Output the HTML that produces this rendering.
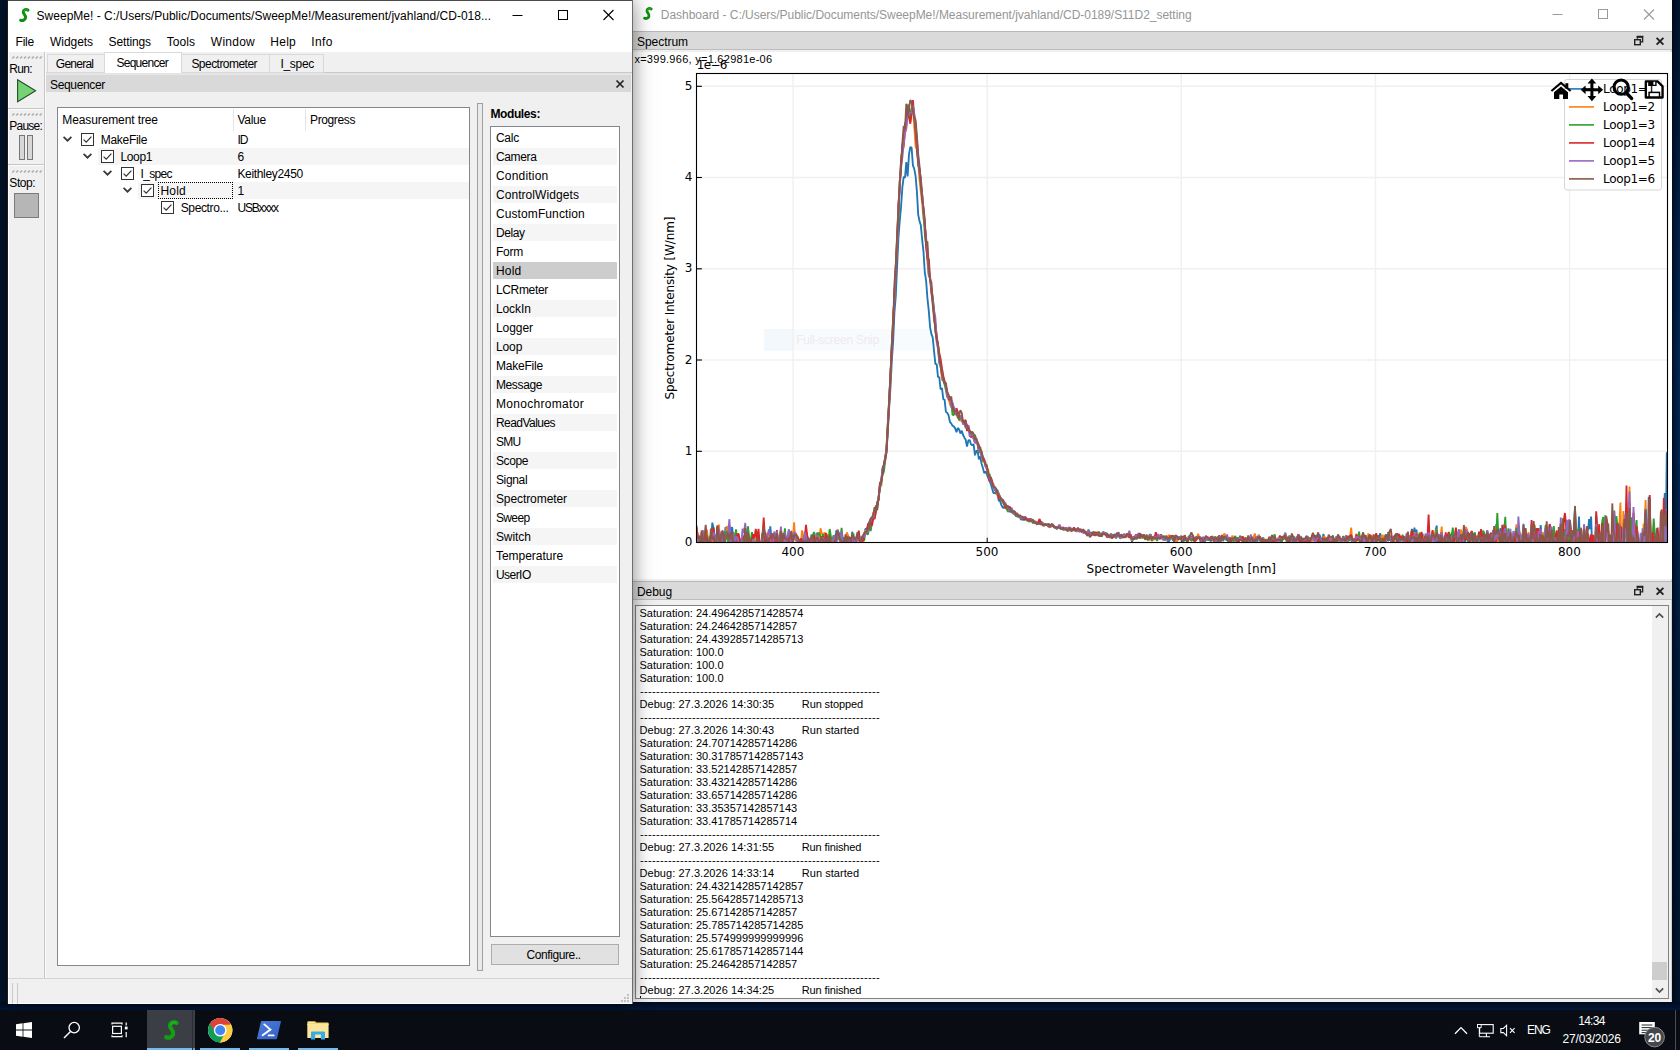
<!DOCTYPE html>
<html lang="en"><head><meta charset="utf-8"><title>SweepMe! Dashboard</title>
<style>
html,body{margin:0;padding:0}
body{width:1680px;height:1050px;overflow:hidden;background:#04132a;position:relative;font-family:"Liberation Sans",sans-serif}
.t{position:absolute;white-space:pre;margin:0;padding:0}
.b{position:absolute;margin:0;padding:0}
svg{position:absolute;overflow:visible}
</style></head>
<body>
<div class="b" style="left:0px;top:0px;width:1680px;height:1050px;background:#02132a;"></div>
<div class="b" style="left:1672px;top:0px;width:8px;height:1010px;background:linear-gradient(to bottom,#011530 0%,#02224c 22%,#02295a 35%,#022450 50%,#011b3e 68%,#01142d 100%);"></div>
<div class="b" style="left:1672px;top:0px;width:8px;height:1010px;background:linear-gradient(to right,rgba(0,8,20,.75),rgba(0,8,20,0));"></div>
<div class="b" style="left:0px;top:1002px;width:1680px;height:8px;background:linear-gradient(to bottom,#010b1c,#02173a);"></div>
<div class="b" style="left:8px;top:0;width:624px;height:1004px;background:#f0f0f0;box-shadow:0 0 20px rgba(0,0,0,.52);z-index:5">
<div class="b" style="left:-8px;top:0;width:0;height:0">
<div class="b" style="left:8px;top:0px;width:624px;height:1px;background:#4a4a4a;"></div>
<div class="b" style="left:8px;top:1px;width:624px;height:50.5px;background:#fff;"></div>
<div class="b" style="left:632px;top:0px;width:1px;height:1004px;background:#6e6e6e;"></div>
<div class="b" style="left:8px;top:1px;width:1px;height:1003px;background:#fff;"></div>
<div class="b" style="left:8px;top:1003px;width:624px;height:1px;background:#fff;"></div>
<div class="b" style="left:7px;top:0px;width:1px;height:1004px;background:#1c1c20;"></div>
<svg style="left:18.8px;top:7.6px" width="10.7067" height="14.6" viewBox="0 0 11 15"><path d="M9.2 2.2 C7.4 1.1 4.6 1.6 4.4 4.0 C4.2 6.6 7.4 7.2 6.7 10.2 C6.1 12.7 3.6 13.3 1.7 12.6" fill="none" stroke="#0f900f" stroke-width="3.1" stroke-linecap="round"/><path d="M8.6 2.0 C6.9 1.3 5.2 2.1 5.0 3.8" fill="none" stroke="#49c549" stroke-width="0.8" stroke-linecap="round" opacity=".65"/></svg>
<div class="t" style="left:36.60px;top:8px;font:12px/16px 'Liberation Sans',sans-serif;letter-spacing:0.012px;color:#000;">SweepMe! - C:/Users/Public/Documents/SweepMe!/Measurement/jvahland/CD-018...</div>
<svg style="left:500px;top:0" width="132" height="30" viewBox="0 0 132 30"><path d="M12.5 15.5 H22.5" stroke="#000" stroke-width="1"/><rect x="58.5" y="10.5" width="9" height="9" fill="none" stroke="#000" stroke-width="1"/><path d="M103.5 10 L113.5 20 M113.5 10 L103.5 20" stroke="#000" stroke-width="1.1"/></svg>
<div class="t" style="left:15.60px;top:34px;font:12px/16px 'Liberation Sans',sans-serif;letter-spacing:-0.234px;color:#000;">File</div>
<div class="t" style="left:50.00px;top:34px;font:12px/16px 'Liberation Sans',sans-serif;letter-spacing:-0.050px;color:#000;">Widgets</div>
<div class="t" style="left:108.60px;top:34px;font:12px/16px 'Liberation Sans',sans-serif;letter-spacing:-0.120px;color:#000;">Settings</div>
<div class="t" style="left:166.80px;top:34px;font:12px/16px 'Liberation Sans',sans-serif;letter-spacing:0.037px;color:#000;">Tools</div>
<div class="t" style="left:210.80px;top:34px;font:12px/16px 'Liberation Sans',sans-serif;letter-spacing:0.253px;color:#000;">Window</div>
<div class="t" style="left:270.30px;top:34px;font:12px/16px 'Liberation Sans',sans-serif;letter-spacing:0.255px;color:#000;">Help</div>
<div class="t" style="left:311.20px;top:34px;font:12px/16px 'Liberation Sans',sans-serif;letter-spacing:0.446px;color:#000;">Info</div>
<div class="b" style="left:44px;top:52px;width:1px;height:926px;background:#c6c6c6;"></div>
<div class="b" style="left:45px;top:52px;width:1px;height:926px;background:#fbfbfb;"></div>
<svg style="left:12px;top:56px" width="31" height="3" viewBox="0 0 31 2"><path d="M0.3 2 L2.3 0" stroke="#adadad" stroke-width="1.6"/><path d="M4.2 2 L6.2 0" stroke="#adadad" stroke-width="1.6"/><path d="M8.1 2 L10.1 0" stroke="#adadad" stroke-width="1.6"/><path d="M12.0 2 L14.0 0" stroke="#adadad" stroke-width="1.6"/><path d="M15.9 2 L17.9 0" stroke="#adadad" stroke-width="1.6"/><path d="M19.8 2 L21.8 0" stroke="#adadad" stroke-width="1.6"/><path d="M23.7 2 L25.7 0" stroke="#adadad" stroke-width="1.6"/><path d="M27.6 2 L29.6 0" stroke="#adadad" stroke-width="1.6"/></svg>
<div class="t" style="left:9.30px;top:61px;font:12px/16px 'Liberation Sans',sans-serif;letter-spacing:-0.662px;color:#000;">Run:</div>
<svg style="left:12px;top:113px" width="31" height="3" viewBox="0 0 31 2"><path d="M0.3 2 L2.3 0" stroke="#adadad" stroke-width="1.6"/><path d="M4.2 2 L6.2 0" stroke="#adadad" stroke-width="1.6"/><path d="M8.1 2 L10.1 0" stroke="#adadad" stroke-width="1.6"/><path d="M12.0 2 L14.0 0" stroke="#adadad" stroke-width="1.6"/><path d="M15.9 2 L17.9 0" stroke="#adadad" stroke-width="1.6"/><path d="M19.8 2 L21.8 0" stroke="#adadad" stroke-width="1.6"/><path d="M23.7 2 L25.7 0" stroke="#adadad" stroke-width="1.6"/><path d="M27.6 2 L29.6 0" stroke="#adadad" stroke-width="1.6"/></svg>
<div class="t" style="left:9.30px;top:118px;font:12px/16px 'Liberation Sans',sans-serif;letter-spacing:-0.777px;color:#000;">Pause:</div>
<svg style="left:12px;top:170px" width="31" height="3" viewBox="0 0 31 2"><path d="M0.3 2 L2.3 0" stroke="#adadad" stroke-width="1.6"/><path d="M4.2 2 L6.2 0" stroke="#adadad" stroke-width="1.6"/><path d="M8.1 2 L10.1 0" stroke="#adadad" stroke-width="1.6"/><path d="M12.0 2 L14.0 0" stroke="#adadad" stroke-width="1.6"/><path d="M15.9 2 L17.9 0" stroke="#adadad" stroke-width="1.6"/><path d="M19.8 2 L21.8 0" stroke="#adadad" stroke-width="1.6"/><path d="M23.7 2 L25.7 0" stroke="#adadad" stroke-width="1.6"/><path d="M27.6 2 L29.6 0" stroke="#adadad" stroke-width="1.6"/></svg>
<div class="t" style="left:9.30px;top:175px;font:12px/16px 'Liberation Sans',sans-serif;letter-spacing:-0.424px;color:#000;">Stop:</div>
<div class="b" style="left:8px;top:108px;width:36px;height:1px;background:#c6c6c6;"></div>
<div class="b" style="left:8px;top:109px;width:36px;height:1px;background:#fbfbfb;"></div>
<div class="b" style="left:8px;top:164px;width:36px;height:1px;background:#c6c6c6;"></div>
<div class="b" style="left:8px;top:165px;width:36px;height:1px;background:#fbfbfb;"></div>
<svg style="left:14px;top:76px" width="26" height="30" viewBox="0 0 26 30"><path d="M3.6 3.8 L21.6 14.8 L3.6 25.8 Z" fill="#75d375" stroke="#264d26" stroke-width="1.1" stroke-linejoin="miter"/></svg>
<div class="b" style="left:19px;top:135px;width:6px;height:25px;background:#d8d8d8;border:1px solid #777;box-sizing:border-box;"></div>
<div class="b" style="left:27px;top:135px;width:6px;height:25px;background:#d8d8d8;border:1px solid #777;box-sizing:border-box;"></div>
<div class="b" style="left:13.5px;top:192.5px;width:25px;height:25px;background:#b6b6b6;border:1.6px solid #7c7c7c;box-sizing:border-box;"></div>
<div class="b" style="left:46px;top:72px;width:586px;height:1px;background:#c9c9c9;"></div>
<div class="b" style="left:46px;top:73px;width:586px;height:1px;background:#e4e4e4;"></div>
<div class="b" style="left:47px;top:54px;width:58px;height:19px;background:#f0f0f0;border:1px solid #d9d9d9;box-sizing:border-box;"></div>
<div class="b" style="left:181px;top:54px;width:89px;height:19px;background:#f0f0f0;border:1px solid #d9d9d9;box-sizing:border-box;"></div>
<div class="b" style="left:269px;top:54px;width:55px;height:19px;background:#f0f0f0;border:1px solid #d9d9d9;box-sizing:border-box;"></div>
<div class="b" style="left:104px;top:52px;width:78px;height:20.5px;background:#fff;border:1px solid #d9d9d9;box-sizing:border-box;border-bottom:none"></div>
<div class="t" style="left:55.80px;top:56px;font:12px/16px 'Liberation Sans',sans-serif;letter-spacing:-0.742px;color:#000;">General</div>
<div class="t" style="left:116.40px;top:55px;font:12px/16px 'Liberation Sans',sans-serif;letter-spacing:-0.716px;color:#000;">Sequencer</div>
<div class="t" style="left:191.40px;top:56px;font:12px/16px 'Liberation Sans',sans-serif;letter-spacing:-0.536px;color:#000;">Spectrometer</div>
<div class="t" style="left:280.40px;top:56px;font:12px/16px 'Liberation Sans',sans-serif;letter-spacing:-0.293px;color:#000;">I_spec</div>
<div class="b" style="left:46px;top:75px;width:585px;height:17px;background:#d9d9d9;"></div>
<div class="b" style="left:46px;top:74px;width:585px;height:1px;background:#e6e6e6;"></div>
<div class="t" style="left:50.00px;top:77px;font:12px/16px 'Liberation Sans',sans-serif;letter-spacing:-0.338px;color:#000;">Sequencer</div>
<svg style="left:615px;top:79px" width="10" height="10" viewBox="0 0 10 10"><path d="M1.5 1.5 L8.5 8.5 M8.5 1.5 L1.5 8.5" stroke="#222" stroke-width="1.7"/></svg>
<div class="b" style="left:57px;top:107px;width:413px;height:859px;background:#fff;border:1px solid #828790;box-sizing:border-box;"></div>
<div class="b" style="left:233px;top:109px;width:1px;height:22px;background:#e5e5e5;"></div>
<div class="b" style="left:305px;top:109px;width:1px;height:22px;background:#e5e5e5;"></div>
<div class="t" style="left:62.30px;top:112px;font:12px/16px 'Liberation Sans',sans-serif;letter-spacing:-0.111px;color:#000;">Measurement tree</div>
<div class="t" style="left:237.40px;top:112px;font:12px/16px 'Liberation Sans',sans-serif;letter-spacing:-0.240px;color:#000;">Value</div>
<div class="t" style="left:310.00px;top:112px;font:12px/16px 'Liberation Sans',sans-serif;letter-spacing:-0.377px;color:#000;">Progress</div>
<div class="b" style="left:98px;top:148px;width:371px;height:17px;background:#f5f5f5;"></div>
<div class="b" style="left:138px;top:182px;width:331px;height:17px;background:#f5f5f5;"></div>
<svg style="left:81px;top:133px" width="13" height="13" viewBox="0 0 13 13"><rect x="0.5" y="0.5" width="12" height="12" fill="#fff" stroke="#333"/><path d="M2.6 6.6 L5.2 9.2 L10.4 3.6" fill="none" stroke="#333" stroke-width="1.2"/></svg>
<svg style="left:63px;top:136px" width="9" height="6" viewBox="0 0 9 6"><path d="M0.6 0.8 L4.5 4.7 L8.4 0.8" fill="none" stroke="#383838" stroke-width="1.7"/></svg>
<div class="t" style="left:100.70px;top:132px;font:12px/16px 'Liberation Sans',sans-serif;letter-spacing:-0.285px;color:#000;">MakeFile</div>
<div class="t" style="left:237.40px;top:132px;font:12px/16px 'Liberation Sans',sans-serif;letter-spacing:-1.000px;color:#000;">ID</div>
<svg style="left:101px;top:150px" width="13" height="13" viewBox="0 0 13 13"><rect x="0.5" y="0.5" width="12" height="12" fill="#fff" stroke="#333"/><path d="M2.6 6.6 L5.2 9.2 L10.4 3.6" fill="none" stroke="#333" stroke-width="1.2"/></svg>
<svg style="left:83px;top:153px" width="9" height="6" viewBox="0 0 9 6"><path d="M0.6 0.8 L4.5 4.7 L8.4 0.8" fill="none" stroke="#383838" stroke-width="1.7"/></svg>
<div class="t" style="left:120.40px;top:149px;font:12px/16px 'Liberation Sans',sans-serif;letter-spacing:-0.334px;color:#000;">Loop1</div>
<div class="t" style="left:237.40px;top:149px;font:12px/16px 'Liberation Sans',sans-serif;letter-spacing:-0.874px;color:#000;">6</div>
<svg style="left:121px;top:167px" width="13" height="13" viewBox="0 0 13 13"><rect x="0.5" y="0.5" width="12" height="12" fill="#fff" stroke="#333"/><path d="M2.6 6.6 L5.2 9.2 L10.4 3.6" fill="none" stroke="#333" stroke-width="1.2"/></svg>
<svg style="left:103px;top:170px" width="9" height="6" viewBox="0 0 9 6"><path d="M0.6 0.8 L4.5 4.7 L8.4 0.8" fill="none" stroke="#383838" stroke-width="1.7"/></svg>
<div class="t" style="left:140.50px;top:166px;font:12px/16px 'Liberation Sans',sans-serif;letter-spacing:-0.676px;color:#000;">I_spec</div>
<div class="t" style="left:237.40px;top:166px;font:12px/16px 'Liberation Sans',sans-serif;letter-spacing:-0.324px;color:#000;">Keithley2450</div>
<svg style="left:141px;top:184px" width="13" height="13" viewBox="0 0 13 13"><rect x="0.5" y="0.5" width="12" height="12" fill="#fff" stroke="#333"/><path d="M2.6 6.6 L5.2 9.2 L10.4 3.6" fill="none" stroke="#333" stroke-width="1.2"/></svg>
<svg style="left:123px;top:187px" width="9" height="6" viewBox="0 0 9 6"><path d="M0.6 0.8 L4.5 4.7 L8.4 0.8" fill="none" stroke="#383838" stroke-width="1.7"/></svg>
<div class="t" style="left:160.50px;top:183px;font:12px/16px 'Liberation Sans',sans-serif;letter-spacing:0.205px;color:#000;">Hold</div>
<div class="t" style="left:237.60px;top:183px;font:12px/16px 'Liberation Sans',sans-serif;color:#000;">1</div>
<svg style="left:161px;top:201px" width="13" height="13" viewBox="0 0 13 13"><rect x="0.5" y="0.5" width="12" height="12" fill="#fff" stroke="#333"/><path d="M2.6 6.6 L5.2 9.2 L10.4 3.6" fill="none" stroke="#333" stroke-width="1.2"/></svg>
<div class="t" style="left:180.70px;top:200px;font:12px/16px 'Liberation Sans',sans-serif;letter-spacing:-0.366px;color:#000;">Spectro...</div>
<div class="t" style="left:237.40px;top:200px;font:12px/16px 'Liberation Sans',sans-serif;letter-spacing:-1.168px;color:#000;">USBxxxx</div>
<div class="b" style="left:158px;top:182px;width:75px;height:17px;border:1px dotted #000;box-sizing:border-box;"></div>
<div class="b" style="left:477px;top:102.5px;width:6px;height:868.5px;background:#e9e9e9;border:1px solid #a0a0a0;box-sizing:border-box;"></div>
<div class="t" style="left:490.40px;top:106px;font:bold 12px/16px 'Liberation Sans',sans-serif;letter-spacing:-0.383px;color:#000;">Modules:</div>
<div class="b" style="left:490px;top:126px;width:130px;height:811px;background:#fff;border:1px solid #828790;box-sizing:border-box;"></div>
<div class="t" style="left:495.90px;top:130px;font:12px/16px 'Liberation Sans',sans-serif;letter-spacing:-0.201px;color:#000;">Calc</div>
<div class="b" style="left:493px;top:148.2px;width:124px;height:17px;background:#f5f5f5;"></div>
<div class="t" style="left:495.90px;top:149px;font:12px/16px 'Liberation Sans',sans-serif;letter-spacing:-0.330px;color:#000;">Camera</div>
<div class="t" style="left:495.90px;top:168px;font:12px/16px 'Liberation Sans',sans-serif;letter-spacing:0.211px;color:#000;">Condition</div>
<div class="b" style="left:493px;top:186.2px;width:124px;height:17px;background:#f5f5f5;"></div>
<div class="t" style="left:495.90px;top:187px;font:12px/16px 'Liberation Sans',sans-serif;letter-spacing:0.076px;color:#000;">ControlWidgets</div>
<div class="t" style="left:495.90px;top:206px;font:12px/16px 'Liberation Sans',sans-serif;letter-spacing:0.109px;color:#000;">CustomFunction</div>
<div class="b" style="left:493px;top:224.2px;width:124px;height:17px;background:#f5f5f5;"></div>
<div class="t" style="left:495.90px;top:225px;font:12px/16px 'Liberation Sans',sans-serif;letter-spacing:-0.376px;color:#000;">Delay</div>
<div class="t" style="left:495.90px;top:244px;font:12px/16px 'Liberation Sans',sans-serif;letter-spacing:-0.174px;color:#000;">Form</div>
<div class="b" style="left:493px;top:262.2px;width:124px;height:17px;background:#cdcdcd;"></div>
<div class="t" style="left:495.90px;top:263px;font:12px/16px 'Liberation Sans',sans-serif;letter-spacing:0.230px;color:#000;">Hold</div>
<div class="t" style="left:495.90px;top:282px;font:12px/16px 'Liberation Sans',sans-serif;letter-spacing:-0.335px;color:#000;">LCRmeter</div>
<div class="b" style="left:493px;top:300.2px;width:124px;height:17px;background:#f5f5f5;"></div>
<div class="t" style="left:495.90px;top:301px;font:12px/16px 'Liberation Sans',sans-serif;letter-spacing:-0.076px;color:#000;">LockIn</div>
<div class="t" style="left:495.90px;top:320px;font:12px/16px 'Liberation Sans',sans-serif;letter-spacing:-0.044px;color:#000;">Logger</div>
<div class="b" style="left:493px;top:338.2px;width:124px;height:17px;background:#f5f5f5;"></div>
<div class="t" style="left:495.90px;top:339px;font:12px/16px 'Liberation Sans',sans-serif;letter-spacing:-0.074px;color:#000;">Loop</div>
<div class="t" style="left:495.90px;top:358px;font:12px/16px 'Liberation Sans',sans-serif;letter-spacing:-0.198px;color:#000;">MakeFile</div>
<div class="b" style="left:493px;top:376.2px;width:124px;height:17px;background:#f5f5f5;"></div>
<div class="t" style="left:495.90px;top:377px;font:12px/16px 'Liberation Sans',sans-serif;letter-spacing:-0.356px;color:#000;">Message</div>
<div class="t" style="left:495.90px;top:396px;font:12px/16px 'Liberation Sans',sans-serif;letter-spacing:0.313px;color:#000;">Monochromator</div>
<div class="b" style="left:493px;top:414.2px;width:124px;height:17px;background:#f5f5f5;"></div>
<div class="t" style="left:495.90px;top:415px;font:12px/16px 'Liberation Sans',sans-serif;letter-spacing:-0.529px;color:#000;">ReadValues</div>
<div class="t" style="left:495.90px;top:434px;font:12px/16px 'Liberation Sans',sans-serif;letter-spacing:-0.689px;color:#000;">SMU</div>
<div class="b" style="left:493px;top:452.2px;width:124px;height:17px;background:#f5f5f5;"></div>
<div class="t" style="left:495.90px;top:453px;font:12px/16px 'Liberation Sans',sans-serif;letter-spacing:-0.365px;color:#000;">Scope</div>
<div class="t" style="left:495.90px;top:472px;font:12px/16px 'Liberation Sans',sans-serif;letter-spacing:-0.326px;color:#000;">Signal</div>
<div class="b" style="left:493px;top:490.2px;width:124px;height:17px;background:#f5f5f5;"></div>
<div class="t" style="left:495.90px;top:491px;font:12px/16px 'Liberation Sans',sans-serif;letter-spacing:-0.077px;color:#000;">Spectrometer</div>
<div class="t" style="left:495.90px;top:510px;font:12px/16px 'Liberation Sans',sans-serif;letter-spacing:-0.598px;color:#000;">Sweep</div>
<div class="b" style="left:493px;top:528.2px;width:124px;height:17px;background:#f5f5f5;"></div>
<div class="t" style="left:495.90px;top:529px;font:12px/16px 'Liberation Sans',sans-serif;letter-spacing:-0.074px;color:#000;">Switch</div>
<div class="t" style="left:495.90px;top:548px;font:12px/16px 'Liberation Sans',sans-serif;letter-spacing:-0.015px;color:#000;">Temperature</div>
<div class="b" style="left:493px;top:566.2px;width:124px;height:17px;background:#f5f5f5;"></div>
<div class="t" style="left:495.90px;top:567px;font:12px/16px 'Liberation Sans',sans-serif;letter-spacing:-0.534px;color:#000;">UserIO</div>
<div class="b" style="left:491px;top:944px;width:128px;height:21px;background:#e1e1e1;border:1px solid #adadad;box-sizing:border-box;"></div>
<div class="t" style="left:526.40px;top:947px;font:12px/16px 'Liberation Sans',sans-serif;letter-spacing:-0.391px;color:#000;">Configure..</div>
<div class="b" style="left:8px;top:978px;width:624px;height:1px;background:#d4d4d4;"></div>
<div class="b" style="left:11.5px;top:983px;width:1px;height:21px;background:#c9c9c9;"></div>
<div class="b" style="left:17px;top:983px;width:1px;height:21px;background:#c9c9c9;"></div>
<div class="b" style="left:627px;top:994px;width:2px;height:2px;background:#c2c2c2;"></div><div class="b" style="left:624px;top:997px;width:2px;height:2px;background:#c2c2c2;"></div><div class="b" style="left:627px;top:997px;width:2px;height:2px;background:#c2c2c2;"></div><div class="b" style="left:621px;top:1000px;width:2px;height:2px;background:#c2c2c2;"></div><div class="b" style="left:624px;top:1000px;width:2px;height:2px;background:#c2c2c2;"></div><div class="b" style="left:627px;top:1000px;width:2px;height:2px;background:#c2c2c2;"></div>
</div></div>
<div class="b" style="left:633px;top:0px;width:1039px;height:1002px;background:#f0f0f0;"></div>
<div class="b" style="left:1671px;top:31px;width:1px;height:971px;background:#d0d0d0;"></div>
<div class="b" style="left:633px;top:0px;width:1039px;height:31px;background:#fff;"></div>
<svg style="left:643px;top:7.4px" width="9.82667" height="13.4" viewBox="0 0 11 15"><path d="M9.2 2.2 C7.4 1.1 4.6 1.6 4.4 4.0 C4.2 6.6 7.4 7.2 6.7 10.2 C6.1 12.7 3.6 13.3 1.7 12.6" fill="none" stroke="#0f900f" stroke-width="3.1" stroke-linecap="round"/><path d="M8.6 2.0 C6.9 1.3 5.2 2.1 5.0 3.8" fill="none" stroke="#49c549" stroke-width="0.8" stroke-linecap="round" opacity=".65"/></svg>
<div class="t" style="left:660.80px;top:7px;font:12px/16px 'Liberation Sans',sans-serif;letter-spacing:-0.029px;color:#969696;">Dashboard - C:/Users/Public/Documents/SweepMe!/Measurement/jvahland/CD-0189/S11D2_setting</div>
<svg style="left:1540px;top:0" width="132" height="30" viewBox="0 0 132 30"><path d="M12.5 14.5 H22.5" stroke="#9a9a9a" stroke-width="1"/><rect x="58.5" y="9.5" width="9" height="9" fill="none" stroke="#9a9a9a" stroke-width="1"/><path d="M104 9.5 L114 19.5 M114 9.5 L104 19.5" stroke="#9a9a9a" stroke-width="1.1"/></svg>
<div class="b" style="left:633px;top:31px;width:1039px;height:19px;background:#dadada;"></div>
<div class="b" style="left:633px;top:31px;width:1039px;height:1px;background:#b8b8b8;"></div>
<div class="b" style="left:633px;top:49px;width:1039px;height:1px;background:#bdbdbd;"></div>
<div class="t" style="left:637.00px;top:34px;font:12px/16px 'Liberation Sans',sans-serif;letter-spacing:-0.044px;color:#000;">Spectrum</div>
<svg style="left:1631.2px;top:34.6px" width="36" height="12" viewBox="0 0 36 12"><path d="M6.4 3.8 V2 H11.6 V6.9 H9.8" fill="none" stroke="#222" stroke-width="1.4"/><path d="M5.7 1.6 H12.3" stroke="#222" stroke-width="1.7"/><rect x="3.7" y="4.7" width="5.6" height="5" fill="none" stroke="#222" stroke-width="1.4"/><path d="M25.6 2.9 L32.4 9.7 M32.4 2.9 L25.6 9.7" stroke="#222" stroke-width="1.9"/></svg>
<svg style="left:633px;top:52px" width="1039" height="527" viewBox="633 52 1039 527">
<defs><clipPath id="axclip"><rect x="696.5" y="73.5" width="971" height="469"/></clipPath></defs>
<rect x="633" y="52" width="1039" height="527" fill="#fff"/>
<rect x="764" y="329" width="169" height="21.7" fill="#f8fbfe"/><rect x="764" y="329" width="30" height="21.7" fill="#f3f8fd"/>
<text x="796.2" y="344" font-family="'Liberation Sans',sans-serif" font-size="12" fill="#efeaec" textLength="83">Full-screen Snip</text>
<line x1="793.1" x2="793.1" y1="73.5" y2="542.5" stroke="#f0f0f0" stroke-width="1.4"/>
<line x1="987.2" x2="987.2" y1="73.5" y2="542.5" stroke="#f0f0f0" stroke-width="1.4"/>
<line x1="1181.3" x2="1181.3" y1="73.5" y2="542.5" stroke="#f0f0f0" stroke-width="1.4"/>
<line x1="1375.5" x2="1375.5" y1="73.5" y2="542.5" stroke="#f0f0f0" stroke-width="1.4"/>
<line x1="1569.6" x2="1569.6" y1="73.5" y2="542.5" stroke="#f0f0f0" stroke-width="1.4"/>
<line x1="696.5" x2="1667.5" y1="451.3" y2="451.3" stroke="#f0f0f0" stroke-width="1.6"/>
<line x1="696.5" x2="1667.5" y1="360.0" y2="360.0" stroke="#f0f0f0" stroke-width="1.6"/>
<line x1="696.5" x2="1667.5" y1="268.8" y2="268.8" stroke="#f0f0f0" stroke-width="1.6"/>
<line x1="696.5" x2="1667.5" y1="177.5" y2="177.5" stroke="#f0f0f0" stroke-width="1.6"/>
<line x1="696.5" x2="1667.5" y1="86.3" y2="86.3" stroke="#f0f0f0" stroke-width="1.6"/>
<line x1="793.1" x2="793.1" y1="542.5" y2="537.7" stroke="#000" stroke-width="1"/>
<line x1="987.2" x2="987.2" y1="542.5" y2="537.7" stroke="#000" stroke-width="1"/>
<line x1="1181.3" x2="1181.3" y1="542.5" y2="537.7" stroke="#000" stroke-width="1"/>
<line x1="1375.5" x2="1375.5" y1="542.5" y2="537.7" stroke="#000" stroke-width="1"/>
<line x1="1569.6" x2="1569.6" y1="542.5" y2="537.7" stroke="#000" stroke-width="1"/>
<g clip-path="url(#axclip)">
<polyline points="696.4,526.7 697.7,541.1 699.1,546.0 700.4,546.0 701.7,545.6 703.0,546.0 704.3,539.0 705.7,546.0 707.0,533.1 708.3,546.0 709.6,546.0 710.9,546.0 712.3,522.6 713.6,528.6 714.9,546.0 716.2,538.8 717.5,525.9 718.9,538.5 720.2,542.2 721.5,537.7 722.8,532.9 724.1,543.9 725.5,527.1 726.8,530.1 728.1,532.5 729.4,525.3 730.7,534.0 732.1,527.0 733.4,539.2 734.7,543.8 736.0,540.4 737.3,537.1 738.7,537.1 740.0,539.7 741.3,546.0 742.6,546.0 743.9,540.5 745.3,529.7 746.6,538.4 747.9,546.0 749.2,542.2 750.5,546.0 751.9,541.8 753.2,538.6 754.5,540.7 755.8,546.0 757.1,533.4 758.5,535.3 759.8,546.0 761.1,546.0 762.4,541.8 763.7,545.4 765.1,532.1 766.4,541.9 767.7,545.0 769.0,543.1 770.3,526.4 771.7,541.3 773.0,539.6 774.3,538.3 775.6,541.9 776.9,531.3 778.3,546.0 779.6,541.9 780.9,535.5 782.2,542.3 783.5,542.7 784.9,544.7 786.2,538.6 787.5,540.7 788.8,546.0 790.1,533.0 791.5,537.6 792.8,536.7 794.1,534.5 795.4,536.0 796.7,540.7 798.1,546.0 799.4,545.8 800.7,546.0 802.0,537.8 803.3,543.6 804.7,537.9 806.0,544.5 807.3,540.7 808.6,546.0 809.9,546.0 811.3,539.1 812.6,546.0 813.9,539.3 815.2,546.0 816.5,532.8 817.9,537.4 819.2,546.0 820.5,543.1 821.8,546.0 823.1,541.6 824.5,546.0 825.8,538.5 827.1,546.0 828.4,537.7 829.7,535.0 831.1,546.0 832.4,542.6 833.7,536.3 835.0,543.6 836.3,530.7 837.7,531.4 839.0,533.3 840.3,545.3 841.6,541.8 843.0,537.2 844.3,544.5 845.6,544.0 846.9,540.5 848.2,536.2 849.6,538.5 850.9,546.0 852.2,531.8 853.5,537.6 854.8,544.8 856.2,536.8 857.5,539.8 858.8,535.6 860.1,538.5 861.4,544.6 862.8,535.2 864.1,535.8 865.4,528.9 866.7,528.8 868.0,525.9 869.4,521.4 870.7,519.1 872.0,518.1 873.3,516.8 874.6,512.7 876.0,510.9 877.3,504.7 878.6,499.3 879.9,485.2 881.2,485.7 882.6,468.0 883.9,465.2 885.2,457.5 886.5,451.8 887.8,432.0 889.2,407.5 890.5,387.1 891.8,361.0 893.1,341.7 894.4,313.0 895.8,295.6 897.1,266.2 898.4,238.8 899.7,221.4 901.0,207.4 902.4,187.1 903.7,176.9 905.0,177.7 906.3,162.1 907.6,176.4 909.0,154.4 910.3,147.0 911.6,147.6 912.9,165.4 914.2,168.6 915.6,176.2 916.9,191.5 918.2,214.6 919.5,221.0 920.8,225.3 922.2,239.9 923.5,251.9 924.8,272.3 926.1,280.7 927.4,297.9 928.8,310.9 930.1,327.4 931.4,334.1 932.7,337.4 934.0,350.6 935.4,364.2 936.7,364.1 938.0,376.9 939.3,377.4 940.6,389.4 942.0,388.2 943.3,399.3 944.6,399.6 945.9,411.8 947.2,412.7 948.6,415.4 949.9,422.0 951.2,423.4 952.5,425.7 953.8,426.4 955.2,428.4 956.5,432.1 957.8,428.0 959.1,429.4 960.4,433.5 961.8,430.7 963.1,435.0 964.4,437.7 965.7,439.8 967.0,446.5 968.4,440.4 969.7,440.1 971.0,444.4 972.3,445.1 973.6,444.3 975.0,455.3 976.3,450.9 977.6,450.6 978.9,459.3 980.2,456.5 981.6,463.7 982.9,467.9 984.2,473.1 985.5,471.5 986.8,474.2 988.2,477.9 989.5,480.6 990.8,484.1 992.1,488.6 993.4,493.0 994.8,492.8 996.1,493.8 997.4,492.8 998.7,500.6 1000.0,500.9 1001.4,505.1 1002.7,507.5 1004.0,507.9 1005.3,505.0 1006.6,509.0 1008.0,510.6 1009.3,511.6 1010.6,511.5 1011.9,512.5 1013.2,513.2 1014.6,514.1 1015.9,516.0 1017.2,516.3 1018.5,516.8 1019.8,517.3 1021.2,519.7 1022.5,519.3 1023.8,519.7 1025.1,519.5 1026.4,519.5 1027.8,520.1 1029.1,521.6 1030.4,521.1 1031.7,521.0 1033.0,522.9 1034.4,521.6 1035.7,523.1 1037.0,523.2 1038.3,522.5 1039.6,524.0 1041.0,524.0 1042.3,523.8 1043.6,524.9 1044.9,524.1 1046.2,524.6 1047.6,524.5 1048.9,526.3 1050.2,525.9 1051.5,525.6 1052.8,525.5 1054.2,527.4 1055.5,527.6 1056.8,528.0 1058.1,526.4 1059.4,528.0 1060.8,529.0 1062.1,529.0 1063.4,529.7 1064.7,528.7 1066.0,528.0 1067.4,530.8 1068.7,530.7 1070.0,528.2 1071.3,530.2 1072.6,530.3 1074.0,528.7 1075.3,530.7 1076.6,531.0 1077.9,528.9 1079.2,531.8 1080.6,530.2 1081.9,532.2 1083.2,530.5 1084.5,532.6 1085.8,531.7 1087.2,534.2 1088.5,529.5 1089.8,533.6 1091.1,534.7 1092.4,533.7 1093.8,534.6 1095.1,533.4 1096.4,534.4 1097.7,534.2 1099.0,533.5 1100.4,536.0 1101.7,533.0 1103.0,534.3 1104.3,533.2 1105.6,533.2 1107.0,533.5 1108.3,536.1 1109.6,537.0 1110.9,534.1 1112.2,534.9 1113.6,535.7 1114.9,534.0 1116.2,538.4 1117.5,534.5 1118.8,536.1 1120.2,538.4 1121.5,536.5 1122.8,536.3 1124.1,533.9 1125.4,535.0 1126.8,535.0 1128.1,536.6 1129.4,533.8 1130.7,536.5 1132.0,541.7 1133.4,538.1 1134.7,536.9 1136.0,538.7 1137.3,537.7 1138.6,533.1 1140.0,537.8 1141.3,535.9 1142.6,537.7 1143.9,536.9 1145.2,539.4 1146.6,538.4 1147.9,539.5 1149.2,538.5 1150.5,534.5 1151.8,539.8 1153.2,537.6 1154.5,539.5 1155.8,538.1 1157.1,538.7 1158.4,535.7 1159.8,538.8 1161.1,536.0 1162.4,537.6 1163.7,540.0 1165.0,539.4 1166.4,536.0 1167.7,541.5 1169.0,541.5 1170.3,538.3 1171.6,536.8 1173.0,540.8 1174.3,538.1 1175.6,536.0 1176.9,537.7 1178.2,539.7 1179.6,538.5 1180.9,536.1 1182.2,536.8 1183.5,537.9 1184.8,537.5 1186.2,540.2 1187.5,539.2 1188.8,539.0 1190.1,539.6 1191.4,538.0 1192.8,535.2 1194.1,541.1 1195.4,537.9 1196.7,537.5 1198.0,537.0 1199.4,537.4 1200.7,538.2 1202.0,539.4 1203.3,541.4 1204.6,538.0 1206.0,536.7 1207.3,538.7 1208.6,539.8 1209.9,540.3 1211.2,541.1 1212.6,538.9 1213.9,538.4 1215.2,537.1 1216.5,539.1 1217.8,542.2 1219.2,539.2 1220.5,539.8 1221.8,536.1 1223.1,541.1 1224.4,537.5 1225.8,537.2 1227.1,537.9 1228.4,539.9 1229.7,543.4 1231.0,539.3 1232.4,537.9 1233.7,538.0 1235.0,539.9 1236.3,540.5 1237.6,537.5 1239.0,540.4 1240.3,537.7 1241.6,540.6 1242.9,537.1 1244.2,544.3 1245.6,540.1 1246.9,542.9 1248.2,537.3 1249.5,537.8 1250.8,538.3 1252.2,538.3 1253.5,540.9 1254.8,538.5 1256.1,538.8 1257.4,541.7 1258.8,534.8 1260.1,540.0 1261.4,539.7 1262.7,537.7 1264.0,538.9 1265.4,539.9 1266.7,543.2 1268.0,546.0 1269.3,539.1 1270.6,540.4 1272.0,535.1 1273.3,540.2 1274.6,535.9 1275.9,542.6 1277.2,540.3 1278.6,539.5 1279.9,539.8 1281.2,544.2 1282.5,539.5 1283.8,537.9 1285.2,534.8 1286.5,539.2 1287.8,541.6 1289.1,535.7 1290.4,538.4 1291.8,535.5 1293.1,541.8 1294.4,545.3 1295.7,544.1 1297.0,540.2 1298.4,536.1 1299.7,542.5 1301.0,539.4 1302.3,544.6 1303.6,539.5 1305.0,543.6 1306.3,535.9 1307.6,536.8 1308.9,539.6 1310.2,541.0 1311.6,539.7 1312.9,533.7 1314.2,541.1 1315.5,536.3 1316.8,538.8 1318.2,536.0 1319.5,534.8 1320.8,538.0 1322.1,542.6 1323.4,533.9 1324.8,539.6 1326.1,540.8 1327.4,542.0 1328.7,542.0 1330.0,538.7 1331.4,541.9 1332.7,535.4 1334.0,539.5 1335.3,545.3 1336.6,540.0 1338.0,541.1 1339.3,539.0 1340.6,541.1 1341.9,539.5 1343.2,538.9 1344.6,541.5 1345.9,536.2 1347.2,536.4 1348.5,539.4 1349.8,535.8 1351.2,537.2 1352.5,542.7 1353.8,540.5 1355.1,539.9 1356.4,535.9 1357.8,539.8 1359.1,534.9 1360.4,538.8 1361.7,541.9 1363.0,540.3 1364.4,540.1 1365.7,536.0 1367.0,540.8 1368.3,537.6 1369.6,537.4 1371.0,542.0 1372.3,541.2 1373.6,539.6 1374.9,542.8 1376.2,535.1 1377.6,540.5 1378.9,538.0 1380.2,533.2 1381.5,543.6 1382.8,541.8 1384.2,543.3 1385.5,542.1 1386.8,537.3 1388.1,540.3 1389.4,540.1 1390.8,538.5 1392.1,546.0 1393.4,538.0 1394.7,539.4 1396.0,538.0 1397.4,533.3 1398.7,540.3 1400.0,539.1 1401.3,538.5 1402.6,537.0 1404.0,544.7 1405.3,543.6 1406.6,546.0 1407.9,536.0 1409.2,539.6 1410.6,538.3 1411.9,528.8 1413.2,535.8 1414.5,527.6 1415.5,539.1 1416.5,529.6 1417.5,540.9 1418.5,540.9 1419.5,537.9 1420.5,535.8 1421.5,535.4 1422.6,533.7 1423.6,543.8 1424.6,539.2 1425.6,537.5 1426.6,539.1 1427.6,535.5 1428.6,537.2 1429.6,541.6 1430.6,539.8 1431.6,540.9 1432.6,534.2 1433.7,536.9 1434.7,540.2 1435.7,529.6 1436.7,525.6 1437.7,543.2 1438.7,538.7 1439.7,545.8 1440.7,539.0 1441.7,535.6 1442.7,545.5 1443.8,546.0 1444.8,537.7 1445.8,536.9 1446.8,546.0 1447.8,541.3 1448.8,532.7 1449.8,534.9 1450.8,542.4 1451.8,532.7 1452.8,540.8 1453.8,540.7 1454.9,539.7 1455.9,529.1 1456.9,538.7 1457.9,536.5 1458.9,529.3 1459.9,540.0 1460.9,542.0 1461.9,535.9 1462.9,543.0 1463.9,536.9 1464.9,544.1 1466.0,531.8 1467.0,529.1 1468.0,535.7 1469.0,539.7 1470.0,533.2 1471.0,545.0 1472.0,534.0 1473.0,544.3 1474.0,532.8 1475.0,540.7 1476.1,536.5 1477.1,538.9 1478.1,536.7 1479.1,534.0 1480.1,539.9 1481.1,533.0 1482.1,542.0 1483.1,545.9 1484.1,533.3 1485.1,539.4 1486.1,538.0 1487.2,530.5 1488.2,534.9 1489.2,546.0 1490.2,544.8 1491.2,541.0 1492.2,537.7 1493.2,530.3 1494.2,546.0 1495.2,540.5 1496.2,524.3 1497.3,538.0 1498.3,537.3 1499.3,541.3 1500.3,528.2 1501.3,539.0 1502.3,532.1 1503.3,536.7 1504.3,524.4 1505.3,526.4 1506.3,544.5 1507.3,546.0 1508.4,529.8 1509.4,539.8 1510.4,542.2 1511.4,546.0 1512.4,540.6 1513.4,545.7 1514.4,536.4 1515.4,531.6 1516.4,526.7 1517.4,542.7 1518.4,530.8 1519.5,532.0 1520.5,542.9 1521.5,545.8 1522.5,539.9 1523.5,523.8 1524.5,541.2 1525.5,538.2 1526.5,546.0 1527.5,546.0 1528.5,538.4 1529.6,545.4 1530.6,543.9 1531.6,546.0 1532.6,546.0 1533.6,533.4 1534.6,539.9 1535.6,531.5 1536.6,533.7 1537.6,546.0 1538.6,541.5 1539.6,537.6 1540.7,525.1 1541.7,539.0 1542.7,546.0 1543.7,540.9 1544.7,544.7 1545.7,536.1 1546.7,546.0 1547.7,536.8 1548.7,538.7 1549.7,524.3 1550.8,536.2 1551.8,535.5 1552.8,534.8 1553.8,533.6 1554.8,536.2 1555.8,533.3 1556.8,540.2 1557.8,540.4 1558.8,531.1 1559.8,546.0 1560.8,529.7 1561.9,546.0 1562.9,543.7 1563.9,531.2 1564.9,536.1 1565.9,537.5 1566.9,542.7 1567.9,546.0 1568.9,528.2 1569.9,520.3 1570.9,528.2 1571.9,546.0 1573.0,542.6 1574.0,538.3 1575.0,506.7 1576.0,537.6 1577.0,546.0 1578.0,540.0 1579.0,516.6 1580.0,546.0 1581.0,532.4 1582.0,546.0 1583.1,546.0 1584.1,524.2 1585.1,546.0 1586.1,546.0 1587.1,528.2 1588.1,530.5 1589.1,519.0 1590.1,529.1 1591.1,516.5 1592.1,546.0 1593.1,540.9 1594.2,546.0 1595.2,546.0 1596.2,515.1 1597.2,526.9 1598.2,542.8 1599.2,531.6 1600.2,544.2 1601.2,546.0 1602.2,523.3 1603.2,539.4 1604.2,542.7 1605.3,538.1 1606.3,534.6 1607.3,535.1 1608.3,530.7 1609.3,545.1 1610.3,536.9 1611.3,546.0 1612.3,532.9 1613.3,537.2 1614.3,520.7 1615.4,545.7 1616.4,536.6 1617.4,540.4 1618.4,536.1 1619.4,524.6 1620.4,533.6 1621.4,543.3 1622.4,546.0 1623.4,537.2 1624.4,535.9 1625.4,527.4 1626.5,517.2 1627.5,546.0 1628.5,516.7 1629.5,524.0 1630.5,531.9 1631.5,529.7 1632.5,535.6 1633.5,520.6 1634.5,523.8 1635.5,546.0 1636.6,545.1 1637.6,546.0 1638.6,546.0 1639.6,546.0 1640.6,546.0 1641.6,546.0 1642.6,541.4 1643.6,541.1 1644.6,545.2 1645.6,508.9 1646.6,540.4 1647.7,546.0 1648.7,497.3 1649.7,498.1 1650.7,546.0 1651.7,546.0 1652.7,546.0 1653.7,532.3 1654.7,534.4 1655.7,546.0 1656.7,528.3 1657.7,534.7 1658.8,546.0 1659.8,546.0 1660.8,546.0 1661.8,515.5 1662.8,546.0 1663.8,515.9 1664.8,493.0 1665.8,537.8 1666.8,452.3 1667.8,499.3 1668.9,516.8" fill="none" stroke="#1f77b4" stroke-width="1.85" stroke-linejoin="bevel"/>
<polyline points="696.4,531.3 697.7,533.1 699.1,536.5 700.4,546.0 701.7,530.0 703.0,544.4 704.3,540.0 705.7,546.0 707.0,529.5 708.3,544.8 709.6,543.8 710.9,545.2 712.3,530.0 713.6,546.0 714.9,546.0 716.2,546.0 717.5,538.3 718.9,524.6 720.2,546.0 721.5,545.1 722.8,543.5 724.1,537.6 725.5,538.0 726.8,526.7 728.1,526.9 729.4,546.0 730.7,546.0 732.1,546.0 733.4,540.9 734.7,546.0 736.0,537.9 737.3,543.3 738.7,546.0 740.0,542.5 741.3,546.0 742.6,546.0 743.9,540.7 745.3,536.5 746.6,543.5 747.9,543.9 749.2,546.0 750.5,542.4 751.9,543.2 753.2,541.1 754.5,537.4 755.8,546.0 757.1,546.0 758.5,538.4 759.8,546.0 761.1,546.0 762.4,533.5 763.7,529.3 765.1,536.8 766.4,534.6 767.7,533.2 769.0,540.5 770.3,536.5 771.7,546.0 773.0,535.3 774.3,536.6 775.6,546.0 776.9,538.7 778.3,538.0 779.6,546.0 780.9,528.6 782.2,537.8 783.5,542.8 784.9,539.6 786.2,546.0 787.5,537.9 788.8,539.3 790.1,535.1 791.5,541.8 792.8,544.9 794.1,522.4 795.4,541.2 796.7,534.6 798.1,537.5 799.4,542.7 800.7,545.4 802.0,530.4 803.3,538.2 804.7,537.1 806.0,531.2 807.3,535.8 808.6,546.0 809.9,546.0 811.3,536.4 812.6,543.3 813.9,535.7 815.2,537.5 816.5,540.2 817.9,532.2 819.2,543.4 820.5,528.3 821.8,533.4 823.1,537.0 824.5,532.5 825.8,535.0 827.1,534.2 828.4,539.9 829.7,543.5 831.1,537.3 832.4,542.8 833.7,540.6 835.0,542.1 836.3,536.1 837.7,535.9 839.0,536.6 840.3,546.0 841.6,537.0 843.0,544.3 844.3,546.0 845.6,539.5 846.9,532.4 848.2,535.8 849.6,540.1 850.9,537.9 852.2,541.2 853.5,536.9 854.8,537.9 856.2,539.3 857.5,534.0 858.8,535.2 860.1,545.2 861.4,538.4 862.8,538.7 864.1,533.9 865.4,530.4 866.7,533.4 868.0,531.7 869.4,525.9 870.7,520.5 872.0,525.4 873.3,512.4 874.6,512.8 876.0,510.2 877.3,503.0 878.6,497.8 879.9,487.0 881.2,485.2 882.6,470.9 883.9,466.8 885.2,458.1 886.5,449.7 887.8,426.4 889.2,402.4 890.5,378.4 891.8,345.1 893.1,317.3 894.4,299.3 895.8,266.1 897.1,246.1 898.4,210.5 899.7,183.4 901.0,167.8 902.4,145.7 903.7,147.5 905.0,132.7 906.3,129.7 907.6,105.3 909.0,105.5 910.3,116.0 911.6,110.2 912.9,108.6 914.2,125.4 915.6,146.6 916.9,149.7 918.2,161.8 919.5,180.0 920.8,191.5 922.2,203.1 923.5,218.9 924.8,225.8 926.1,238.8 927.4,262.0 928.8,275.3 930.1,277.8 931.4,291.2 932.7,300.8 934.0,320.7 935.4,325.0 936.7,335.8 938.0,348.6 939.3,357.7 940.6,363.2 942.0,380.3 943.3,377.7 944.6,382.9 945.9,386.8 947.2,391.2 948.6,398.1 949.9,404.4 951.2,406.7 952.5,404.6 953.8,412.6 955.2,414.4 956.5,413.8 957.8,413.5 959.1,420.3 960.4,420.4 961.8,420.8 963.1,421.8 964.4,424.4 965.7,421.9 967.0,428.7 968.4,429.3 969.7,430.4 971.0,437.0 972.3,436.7 973.6,439.0 975.0,441.9 976.3,443.4 977.6,443.4 978.9,452.4 980.2,451.3 981.6,450.9 982.9,461.7 984.2,461.2 985.5,462.3 986.8,469.2 988.2,469.7 989.5,476.8 990.8,478.2 992.1,480.5 993.4,486.7 994.8,487.9 996.1,490.1 997.4,496.2 998.7,495.6 1000.0,496.2 1001.4,499.3 1002.7,499.5 1004.0,502.4 1005.3,503.1 1006.6,509.0 1008.0,509.5 1009.3,510.0 1010.6,508.2 1011.9,511.1 1013.2,513.8 1014.6,511.9 1015.9,513.2 1017.2,516.3 1018.5,516.2 1019.8,516.3 1021.2,516.8 1022.5,516.4 1023.8,518.7 1025.1,517.5 1026.4,518.9 1027.8,521.2 1029.1,518.8 1030.4,519.1 1031.7,519.6 1033.0,520.1 1034.4,521.6 1035.7,522.6 1037.0,523.2 1038.3,523.4 1039.6,522.7 1041.0,523.3 1042.3,524.2 1043.6,523.3 1044.9,524.8 1046.2,524.8 1047.6,525.1 1048.9,527.5 1050.2,526.3 1051.5,525.9 1052.8,525.9 1054.2,527.0 1055.5,528.3 1056.8,526.8 1058.1,526.9 1059.4,526.8 1060.8,528.3 1062.1,529.2 1063.4,527.0 1064.7,530.0 1066.0,529.0 1067.4,530.4 1068.7,530.7 1070.0,528.7 1071.3,530.8 1072.6,529.6 1074.0,529.6 1075.3,528.7 1076.6,532.0 1077.9,528.1 1079.2,529.8 1080.6,530.8 1081.9,532.4 1083.2,530.3 1084.5,532.9 1085.8,531.4 1087.2,536.3 1088.5,531.2 1089.8,533.9 1091.1,535.1 1092.4,534.2 1093.8,533.5 1095.1,534.2 1096.4,534.4 1097.7,535.9 1099.0,532.9 1100.4,534.8 1101.7,534.4 1103.0,533.7 1104.3,533.3 1105.6,533.4 1107.0,535.1 1108.3,535.2 1109.6,537.6 1110.9,537.6 1112.2,537.1 1113.6,536.7 1114.9,537.1 1116.2,534.5 1117.5,535.5 1118.8,534.3 1120.2,538.6 1121.5,535.6 1122.8,536.2 1124.1,534.0 1125.4,537.8 1126.8,534.1 1128.1,537.0 1129.4,533.9 1130.7,538.8 1132.0,540.1 1133.4,538.1 1134.7,536.1 1136.0,537.4 1137.3,536.6 1138.6,534.8 1140.0,536.3 1141.3,536.1 1142.6,538.2 1143.9,535.5 1145.2,538.7 1146.6,537.4 1147.9,539.6 1149.2,539.8 1150.5,538.2 1151.8,540.7 1153.2,539.6 1154.5,539.4 1155.8,535.4 1157.1,541.0 1158.4,536.2 1159.8,536.7 1161.1,537.9 1162.4,535.9 1163.7,539.6 1165.0,540.3 1166.4,535.6 1167.7,538.3 1169.0,534.9 1170.3,536.1 1171.6,538.8 1173.0,535.8 1174.3,542.5 1175.6,536.7 1176.9,542.1 1178.2,537.5 1179.6,538.3 1180.9,536.1 1182.2,538.2 1183.5,539.4 1184.8,536.2 1186.2,538.8 1187.5,542.5 1188.8,538.8 1190.1,538.1 1191.4,540.8 1192.8,539.7 1194.1,539.3 1195.4,538.8 1196.7,538.8 1198.0,533.8 1199.4,537.1 1200.7,537.9 1202.0,538.2 1203.3,538.9 1204.6,541.3 1206.0,539.8 1207.3,539.2 1208.6,540.0 1209.9,538.7 1211.2,536.9 1212.6,539.7 1213.9,539.2 1215.2,540.7 1216.5,540.2 1217.8,538.1 1219.2,537.7 1220.5,539.6 1221.8,538.0 1223.1,537.8 1224.4,533.3 1225.8,538.3 1227.1,540.1 1228.4,537.9 1229.7,537.7 1231.0,540.5 1232.4,535.4 1233.7,541.7 1235.0,537.6 1236.3,540.3 1237.6,539.4 1239.0,539.6 1240.3,536.9 1241.6,537.6 1242.9,540.4 1244.2,542.3 1245.6,537.3 1246.9,543.5 1248.2,537.8 1249.5,541.1 1250.8,538.9 1252.2,543.0 1253.5,537.8 1254.8,533.4 1256.1,538.0 1257.4,539.7 1258.8,535.4 1260.1,540.7 1261.4,540.4 1262.7,540.5 1264.0,538.8 1265.4,541.2 1266.7,541.5 1268.0,539.9 1269.3,537.9 1270.6,537.1 1272.0,538.8 1273.3,539.6 1274.6,534.1 1275.9,542.2 1277.2,541.0 1278.6,539.9 1279.9,541.0 1281.2,537.9 1282.5,537.2 1283.8,539.4 1285.2,538.2 1286.5,539.6 1287.8,537.3 1289.1,537.5 1290.4,538.1 1291.8,539.8 1293.1,535.8 1294.4,539.6 1295.7,542.3 1297.0,538.6 1298.4,534.2 1299.7,538.7 1301.0,536.2 1302.3,541.8 1303.6,540.4 1305.0,541.0 1306.3,537.6 1307.6,536.8 1308.9,539.8 1310.2,537.5 1311.6,544.3 1312.9,535.1 1314.2,538.4 1315.5,537.0 1316.8,539.8 1318.2,541.4 1319.5,542.8 1320.8,543.2 1322.1,543.6 1323.4,536.9 1324.8,536.7 1326.1,542.1 1327.4,543.0 1328.7,540.8 1330.0,541.7 1331.4,538.0 1332.7,540.2 1334.0,538.4 1335.3,540.5 1336.6,541.1 1338.0,539.9 1339.3,538.6 1340.6,542.9 1341.9,542.0 1343.2,537.1 1344.6,539.1 1345.9,543.7 1347.2,537.0 1348.5,538.4 1349.8,537.8 1351.2,527.5 1352.5,545.8 1353.8,539.3 1355.1,538.2 1356.4,542.1 1357.8,538.6 1359.1,538.3 1360.4,544.7 1361.7,535.7 1363.0,535.8 1364.4,542.6 1365.7,537.3 1367.0,546.0 1368.3,533.3 1369.6,542.5 1371.0,539.2 1372.3,543.2 1373.6,534.2 1374.9,543.2 1376.2,536.6 1377.6,536.7 1378.9,537.7 1380.2,537.4 1381.5,536.8 1382.8,534.8 1384.2,546.0 1385.5,537.5 1386.8,537.4 1388.1,537.4 1389.4,534.5 1390.8,536.2 1392.1,540.7 1393.4,543.3 1394.7,541.0 1396.0,542.4 1397.4,538.8 1398.7,535.5 1400.0,535.2 1401.3,538.2 1402.6,537.7 1404.0,542.5 1405.3,537.8 1406.6,539.3 1407.9,535.2 1409.2,536.1 1410.6,540.5 1411.9,532.1 1413.2,538.5 1414.5,532.1 1415.5,538.3 1416.5,532.8 1417.5,543.9 1418.5,542.2 1419.5,541.0 1420.5,534.4 1421.5,545.1 1422.6,536.2 1423.6,540.7 1424.6,536.6 1425.6,543.6 1426.6,543.6 1427.6,538.6 1428.6,536.3 1429.6,546.0 1430.6,545.1 1431.6,541.1 1432.6,531.1 1433.7,539.0 1434.7,541.1 1435.7,532.5 1436.7,528.9 1437.7,538.8 1438.7,539.3 1439.7,536.1 1440.7,536.3 1441.7,526.5 1442.7,546.0 1443.8,544.9 1444.8,539.1 1445.8,536.6 1446.8,546.0 1447.8,546.0 1448.8,537.0 1449.8,535.4 1450.8,539.4 1451.8,536.4 1452.8,534.4 1453.8,537.0 1454.9,539.7 1455.9,530.1 1456.9,535.2 1457.9,536.9 1458.9,534.3 1459.9,541.6 1460.9,529.5 1461.9,536.4 1462.9,537.3 1463.9,530.8 1464.9,536.2 1466.0,526.8 1467.0,530.4 1468.0,536.2 1469.0,542.7 1470.0,546.0 1471.0,543.9 1472.0,536.2 1473.0,540.7 1474.0,539.4 1475.0,540.1 1476.1,535.6 1477.1,540.3 1478.1,537.3 1479.1,541.3 1480.1,536.5 1481.1,540.9 1482.1,539.2 1483.1,535.5 1484.1,538.6 1485.1,544.9 1486.1,538.3 1487.2,541.5 1488.2,535.7 1489.2,544.2 1490.2,538.2 1491.2,536.7 1492.2,538.1 1493.2,532.2 1494.2,542.9 1495.2,527.0 1496.2,546.0 1497.3,534.2 1498.3,536.9 1499.3,543.0 1500.3,534.6 1501.3,536.5 1502.3,538.8 1503.3,538.5 1504.3,536.1 1505.3,533.4 1506.3,546.0 1507.3,546.0 1508.4,537.1 1509.4,545.7 1510.4,535.5 1511.4,537.8 1512.4,535.2 1513.4,534.7 1514.4,537.4 1515.4,544.2 1516.4,524.4 1517.4,535.7 1518.4,536.8 1519.5,540.0 1520.5,532.9 1521.5,546.0 1522.5,546.0 1523.5,530.9 1524.5,546.0 1525.5,528.3 1526.5,538.5 1527.5,546.0 1528.5,532.1 1529.6,539.8 1530.6,539.0 1531.6,532.7 1532.6,546.0 1533.6,539.7 1534.6,524.9 1535.6,531.5 1536.6,541.2 1537.6,546.0 1538.6,546.0 1539.6,544.7 1540.7,530.3 1541.7,541.0 1542.7,532.2 1543.7,542.4 1544.7,534.8 1545.7,532.9 1546.7,528.5 1547.7,530.0 1548.7,546.0 1549.7,540.4 1550.8,538.5 1551.8,540.2 1552.8,532.9 1553.8,545.5 1554.8,533.1 1555.8,542.9 1556.8,539.5 1557.8,535.7 1558.8,546.0 1559.8,546.0 1560.8,527.3 1561.9,546.0 1562.9,546.0 1563.9,546.0 1564.9,534.6 1565.9,540.7 1566.9,535.8 1567.9,527.4 1568.9,527.9 1569.9,529.6 1570.9,527.4 1571.9,546.0 1573.0,535.6 1574.0,541.2 1575.0,515.3 1576.0,546.0 1577.0,533.2 1578.0,535.1 1579.0,540.7 1580.0,545.8 1581.0,527.5 1582.0,540.7 1583.1,546.0 1584.1,525.7 1585.1,546.0 1586.1,542.7 1587.1,528.0 1588.1,546.0 1589.1,546.0 1590.1,540.5 1591.1,538.0 1592.1,546.0 1593.1,546.0 1594.2,546.0 1595.2,546.0 1596.2,530.9 1597.2,539.2 1598.2,524.0 1599.2,532.5 1600.2,546.0 1601.2,546.0 1602.2,523.9 1603.2,526.0 1604.2,546.0 1605.3,522.7 1606.3,516.2 1607.3,541.8 1608.3,531.8 1609.3,546.0 1610.3,546.0 1611.3,546.0 1612.3,523.9 1613.3,544.4 1614.3,514.8 1615.4,542.5 1616.4,534.0 1617.4,546.0 1618.4,544.0 1619.4,524.1 1620.4,502.6 1621.4,546.0 1622.4,546.0 1623.4,511.0 1624.4,538.0 1625.4,532.0 1626.5,511.3 1627.5,546.0 1628.5,546.0 1629.5,486.5 1630.5,546.0 1631.5,544.7 1632.5,543.7 1633.5,513.2 1634.5,546.0 1635.5,544.3 1636.6,546.0 1637.6,546.0 1638.6,546.0 1639.6,546.0 1640.6,544.1 1641.6,546.0 1642.6,545.1 1643.6,523.7 1644.6,524.8 1645.6,500.1 1646.6,544.8 1647.7,546.0 1648.7,544.7 1649.7,507.6 1650.7,546.0 1651.7,546.0 1652.7,546.0 1653.7,524.8 1654.7,537.2 1655.7,546.0 1656.7,546.0 1657.7,539.6 1658.8,546.0 1659.8,546.0 1660.8,543.6 1661.8,511.3 1662.8,535.0 1663.8,528.9 1664.8,538.2 1665.8,542.9 1666.8,529.3 1667.8,529.3 1668.9,542.0" fill="none" stroke="#ff7f0e" stroke-width="1.85" stroke-linejoin="bevel"/>
<polyline points="696.4,533.9 697.7,539.8 699.1,539.5 700.4,546.0 701.7,540.2 703.0,533.5 704.3,537.5 705.7,542.3 707.0,546.0 708.3,546.0 709.6,537.1 710.9,535.6 712.3,536.1 713.6,532.0 714.9,546.0 716.2,535.5 717.5,543.6 718.9,530.2 720.2,546.0 721.5,546.0 722.8,538.9 724.1,538.6 725.5,532.8 726.8,531.4 728.1,545.9 729.4,539.9 730.7,539.6 732.1,540.3 733.4,532.2 734.7,546.0 736.0,529.4 737.3,541.9 738.7,545.4 740.0,540.0 741.3,545.1 742.6,539.8 743.9,539.8 745.3,531.6 746.6,542.3 747.9,526.2 749.2,537.0 750.5,544.0 751.9,532.1 753.2,538.5 754.5,546.0 755.8,546.0 757.1,543.7 758.5,535.0 759.8,544.4 761.1,546.0 762.4,533.0 763.7,537.6 765.1,538.1 766.4,537.3 767.7,538.8 769.0,544.9 770.3,546.0 771.7,546.0 773.0,545.9 774.3,535.9 775.6,539.5 776.9,543.2 778.3,546.0 779.6,539.3 780.9,529.1 782.2,542.1 783.5,546.0 784.9,528.4 786.2,544.8 787.5,546.0 788.8,531.1 790.1,532.8 791.5,540.3 792.8,536.7 794.1,537.1 795.4,537.7 796.7,540.6 798.1,541.3 799.4,546.0 800.7,546.0 802.0,541.4 803.3,546.0 804.7,534.9 806.0,535.7 807.3,543.3 808.6,540.7 809.9,546.0 811.3,534.7 812.6,536.5 813.9,531.9 815.2,544.4 816.5,542.7 817.9,533.9 819.2,532.9 820.5,536.8 821.8,541.9 823.1,533.8 824.5,546.0 825.8,533.8 827.1,537.1 828.4,540.6 829.7,529.0 831.1,538.0 832.4,539.7 833.7,535.2 835.0,541.5 836.3,542.0 837.7,537.2 839.0,538.8 840.3,539.3 841.6,527.8 843.0,541.7 844.3,546.0 845.6,542.9 846.9,537.5 848.2,545.2 849.6,538.3 850.9,539.5 852.2,539.7 853.5,533.7 854.8,546.0 856.2,539.9 857.5,538.4 858.8,536.7 860.1,540.0 861.4,538.1 862.8,537.1 864.1,541.0 865.4,531.6 866.7,533.9 868.0,534.4 869.4,525.9 870.7,531.1 872.0,522.4 873.3,514.6 874.6,513.4 876.0,505.2 877.3,509.9 878.6,496.7 879.9,489.0 881.2,482.2 882.6,474.9 883.9,471.7 885.2,460.9 886.5,447.3 887.8,423.1 889.2,399.2 890.5,374.3 891.8,344.4 893.1,320.8 894.4,297.0 895.8,272.6 897.1,235.9 898.4,223.1 899.7,182.7 901.0,161.9 902.4,144.6 903.7,138.2 905.0,128.0 906.3,125.3 907.6,105.1 909.0,105.8 910.3,122.0 911.6,108.6 912.9,106.8 914.2,116.5 915.6,130.5 916.9,144.8 918.2,166.0 919.5,167.9 920.8,185.3 922.2,194.5 923.5,213.2 924.8,233.4 926.1,245.5 927.4,253.9 928.8,273.3 930.1,279.4 931.4,287.0 932.7,297.2 934.0,309.1 935.4,331.4 936.7,338.1 938.0,345.3 939.3,363.5 940.6,365.1 942.0,369.9 943.3,380.3 944.6,384.6 945.9,390.3 947.2,397.0 948.6,396.7 949.9,398.9 951.2,400.2 952.5,414.9 953.8,415.0 955.2,411.5 956.5,414.6 957.8,416.3 959.1,420.0 960.4,418.4 961.8,415.8 963.1,424.1 964.4,422.3 965.7,423.9 967.0,424.5 968.4,429.7 969.7,432.3 971.0,431.6 972.3,434.7 973.6,436.5 975.0,434.8 976.3,441.3 977.6,443.2 978.9,452.5 980.2,451.6 981.6,452.3 982.9,456.5 984.2,459.9 985.5,464.2 986.8,466.2 988.2,475.5 989.5,473.9 990.8,479.8 992.1,483.2 993.4,486.3 994.8,490.1 996.1,491.8 997.4,489.8 998.7,494.5 1000.0,497.6 1001.4,498.9 1002.7,500.4 1004.0,504.9 1005.3,502.7 1006.6,508.0 1008.0,512.0 1009.3,506.6 1010.6,509.1 1011.9,510.7 1013.2,510.7 1014.6,514.1 1015.9,515.1 1017.2,516.2 1018.5,516.6 1019.8,515.2 1021.2,516.8 1022.5,518.0 1023.8,519.9 1025.1,518.6 1026.4,518.4 1027.8,519.7 1029.1,520.6 1030.4,519.8 1031.7,520.8 1033.0,522.9 1034.4,522.6 1035.7,522.8 1037.0,522.8 1038.3,523.1 1039.6,522.4 1041.0,522.0 1042.3,522.3 1043.6,524.9 1044.9,524.4 1046.2,524.3 1047.6,525.0 1048.9,526.5 1050.2,525.4 1051.5,526.4 1052.8,525.5 1054.2,527.6 1055.5,526.7 1056.8,529.2 1058.1,526.7 1059.4,525.4 1060.8,528.1 1062.1,528.5 1063.4,529.2 1064.7,529.2 1066.0,527.9 1067.4,530.8 1068.7,529.8 1070.0,529.0 1071.3,528.7 1072.6,530.1 1074.0,529.7 1075.3,529.6 1076.6,530.5 1077.9,529.4 1079.2,531.4 1080.6,529.1 1081.9,531.5 1083.2,532.0 1084.5,532.8 1085.8,532.3 1087.2,535.3 1088.5,531.6 1089.8,532.2 1091.1,534.0 1092.4,532.4 1093.8,532.0 1095.1,533.4 1096.4,533.6 1097.7,534.4 1099.0,531.6 1100.4,534.7 1101.7,536.6 1103.0,534.4 1104.3,533.7 1105.6,535.1 1107.0,535.7 1108.3,534.5 1109.6,536.2 1110.9,534.7 1112.2,536.1 1113.6,536.0 1114.9,534.7 1116.2,534.7 1117.5,535.4 1118.8,535.3 1120.2,536.5 1121.5,534.9 1122.8,537.6 1124.1,535.3 1125.4,536.0 1126.8,535.7 1128.1,535.8 1129.4,535.4 1130.7,538.3 1132.0,537.7 1133.4,539.1 1134.7,539.2 1136.0,537.3 1137.3,538.8 1138.6,535.2 1140.0,538.5 1141.3,534.6 1142.6,538.1 1143.9,536.0 1145.2,539.2 1146.6,538.1 1147.9,540.2 1149.2,535.2 1150.5,534.2 1151.8,540.9 1153.2,537.8 1154.5,536.8 1155.8,536.6 1157.1,540.7 1158.4,535.3 1159.8,537.5 1161.1,536.1 1162.4,538.0 1163.7,535.6 1165.0,540.1 1166.4,538.5 1167.7,539.2 1169.0,538.9 1170.3,537.7 1171.6,537.1 1173.0,539.6 1174.3,536.9 1175.6,535.9 1176.9,536.9 1178.2,538.8 1179.6,538.8 1180.9,536.4 1182.2,540.0 1183.5,542.5 1184.8,537.0 1186.2,540.0 1187.5,541.9 1188.8,536.1 1190.1,537.3 1191.4,541.0 1192.8,538.1 1194.1,541.0 1195.4,537.5 1196.7,537.3 1198.0,537.7 1199.4,537.4 1200.7,541.9 1202.0,540.6 1203.3,539.9 1204.6,542.8 1206.0,537.4 1207.3,540.1 1208.6,538.6 1209.9,540.0 1211.2,537.2 1212.6,538.2 1213.9,540.1 1215.2,536.5 1216.5,539.7 1217.8,537.0 1219.2,537.1 1220.5,540.8 1221.8,538.5 1223.1,539.8 1224.4,537.2 1225.8,539.7 1227.1,540.2 1228.4,541.7 1229.7,538.1 1231.0,541.4 1232.4,539.4 1233.7,542.0 1235.0,535.9 1236.3,538.5 1237.6,538.1 1239.0,539.0 1240.3,535.7 1241.6,539.8 1242.9,539.2 1244.2,540.5 1245.6,537.8 1246.9,543.3 1248.2,538.0 1249.5,544.3 1250.8,539.0 1252.2,542.3 1253.5,542.3 1254.8,541.0 1256.1,540.6 1257.4,538.0 1258.8,537.1 1260.1,540.2 1261.4,543.2 1262.7,539.3 1264.0,541.6 1265.4,540.6 1266.7,539.7 1268.0,540.1 1269.3,541.8 1270.6,544.0 1272.0,539.0 1273.3,539.1 1274.6,534.6 1275.9,540.0 1277.2,540.3 1278.6,539.0 1279.9,539.9 1281.2,541.1 1282.5,539.9 1283.8,537.9 1285.2,532.7 1286.5,537.4 1287.8,538.9 1289.1,542.0 1290.4,543.1 1291.8,536.9 1293.1,539.8 1294.4,536.7 1295.7,541.3 1297.0,538.2 1298.4,536.0 1299.7,539.2 1301.0,536.9 1302.3,539.4 1303.6,541.9 1305.0,539.6 1306.3,538.5 1307.6,538.4 1308.9,538.0 1310.2,540.2 1311.6,537.5 1312.9,535.6 1314.2,540.2 1315.5,535.4 1316.8,537.2 1318.2,537.4 1319.5,541.7 1320.8,539.8 1322.1,539.6 1323.4,538.7 1324.8,542.9 1326.1,540.8 1327.4,539.7 1328.7,541.0 1330.0,545.2 1331.4,542.7 1332.7,540.8 1334.0,542.7 1335.3,540.2 1336.6,536.4 1338.0,541.4 1339.3,536.2 1340.6,540.3 1341.9,541.3 1343.2,535.9 1344.6,541.2 1345.9,536.5 1347.2,540.5 1348.5,541.2 1349.8,539.7 1351.2,539.6 1352.5,544.7 1353.8,541.7 1355.1,542.7 1356.4,536.3 1357.8,539.5 1359.1,531.6 1360.4,542.2 1361.7,539.2 1363.0,532.6 1364.4,540.1 1365.7,536.9 1367.0,538.6 1368.3,539.5 1369.6,538.7 1371.0,537.1 1372.3,539.1 1373.6,537.6 1374.9,542.0 1376.2,541.5 1377.6,541.6 1378.9,536.3 1380.2,542.8 1381.5,543.4 1382.8,538.0 1384.2,541.6 1385.5,534.5 1386.8,539.6 1388.1,532.2 1389.4,537.9 1390.8,540.7 1392.1,546.0 1393.4,538.4 1394.7,538.9 1396.0,536.0 1397.4,541.1 1398.7,537.4 1400.0,542.3 1401.3,539.2 1402.6,534.8 1404.0,539.8 1405.3,542.4 1406.6,538.3 1407.9,536.9 1409.2,545.7 1410.6,539.6 1411.9,539.4 1413.2,539.5 1414.5,533.8 1415.5,546.0 1416.5,536.2 1417.5,537.7 1418.5,546.0 1419.5,532.6 1420.5,535.3 1421.5,537.6 1422.6,541.5 1423.6,543.5 1424.6,540.8 1425.6,538.4 1426.6,542.1 1427.6,544.1 1428.6,532.1 1429.6,543.0 1430.6,537.2 1431.6,537.3 1432.6,533.7 1433.7,539.4 1434.7,540.2 1435.7,542.9 1436.7,529.5 1437.7,539.6 1438.7,539.5 1439.7,536.1 1440.7,538.1 1441.7,535.1 1442.7,543.6 1443.8,540.5 1444.8,543.7 1445.8,534.5 1446.8,544.4 1447.8,538.8 1448.8,536.1 1449.8,546.0 1450.8,535.7 1451.8,535.3 1452.8,527.5 1453.8,538.9 1454.9,534.6 1455.9,536.7 1456.9,540.0 1457.9,534.7 1458.9,533.9 1459.9,543.2 1460.9,536.6 1461.9,542.2 1462.9,539.2 1463.9,532.9 1464.9,534.0 1466.0,533.6 1467.0,536.4 1468.0,543.7 1469.0,542.6 1470.0,537.4 1471.0,539.2 1472.0,533.1 1473.0,539.5 1474.0,539.4 1475.0,532.3 1476.1,543.9 1477.1,544.8 1478.1,537.5 1479.1,539.3 1480.1,541.4 1481.1,538.6 1482.1,546.0 1483.1,530.6 1484.1,532.6 1485.1,545.4 1486.1,543.2 1487.2,536.9 1488.2,539.1 1489.2,538.9 1490.2,534.4 1491.2,537.8 1492.2,534.6 1493.2,531.3 1494.2,541.9 1495.2,536.1 1496.2,537.4 1497.3,513.0 1498.3,533.2 1499.3,541.4 1500.3,531.9 1501.3,546.0 1502.3,534.8 1503.3,546.0 1504.3,530.6 1505.3,516.7 1506.3,546.0 1507.3,546.0 1508.4,528.2 1509.4,545.9 1510.4,537.4 1511.4,544.5 1512.4,535.2 1513.4,534.0 1514.4,534.4 1515.4,546.0 1516.4,528.0 1517.4,539.4 1518.4,539.5 1519.5,541.6 1520.5,534.1 1521.5,546.0 1522.5,546.0 1523.5,539.5 1524.5,533.8 1525.5,546.0 1526.5,544.4 1527.5,542.1 1528.5,540.0 1529.6,536.5 1530.6,546.0 1531.6,526.0 1532.6,546.0 1533.6,545.7 1534.6,535.2 1535.6,528.6 1536.6,538.1 1537.6,546.0 1538.6,539.0 1539.6,542.6 1540.7,539.6 1541.7,534.6 1542.7,546.0 1543.7,542.6 1544.7,533.2 1545.7,524.9 1546.7,539.2 1547.7,535.9 1548.7,536.5 1549.7,525.3 1550.8,546.0 1551.8,540.4 1552.8,546.0 1553.8,526.1 1554.8,538.0 1555.8,545.7 1556.8,533.7 1557.8,535.4 1558.8,540.9 1559.8,546.0 1560.8,524.5 1561.9,546.0 1562.9,518.3 1563.9,545.0 1564.9,529.0 1565.9,540.6 1566.9,542.5 1567.9,534.6 1568.9,541.7 1569.9,524.6 1570.9,535.4 1571.9,544.1 1573.0,546.0 1574.0,532.3 1575.0,507.0 1576.0,546.0 1577.0,541.6 1578.0,529.0 1579.0,534.6 1580.0,531.7 1581.0,534.8 1582.0,546.0 1583.1,538.2 1584.1,539.4 1585.1,546.0 1586.1,546.0 1587.1,541.0 1588.1,542.8 1589.1,539.2 1590.1,546.0 1591.1,536.2 1592.1,546.0 1593.1,538.4 1594.2,546.0 1595.2,546.0 1596.2,539.5 1597.2,546.0 1598.2,546.0 1599.2,546.0 1600.2,541.3 1601.2,546.0 1602.2,521.7 1603.2,516.9 1604.2,545.8 1605.3,515.2 1606.3,520.7 1607.3,534.4 1608.3,545.3 1609.3,542.7 1610.3,546.0 1611.3,546.0 1612.3,535.8 1613.3,546.0 1614.3,510.6 1615.4,546.0 1616.4,516.1 1617.4,525.2 1618.4,539.7 1619.4,546.0 1620.4,546.0 1621.4,527.0 1622.4,546.0 1623.4,532.7 1624.4,542.3 1625.4,530.3 1626.5,513.3 1627.5,514.6 1628.5,530.7 1629.5,510.7 1630.5,546.0 1631.5,517.4 1632.5,546.0 1633.5,519.8 1634.5,535.0 1635.5,546.0 1636.6,520.1 1637.6,546.0 1638.6,546.0 1639.6,546.0 1640.6,542.6 1641.6,532.7 1642.6,546.0 1643.6,546.0 1644.6,528.6 1645.6,512.5 1646.6,546.0 1647.7,542.6 1648.7,529.0 1649.7,500.1 1650.7,546.0 1651.7,546.0 1652.7,538.9 1653.7,518.6 1654.7,534.5 1655.7,546.0 1656.7,536.5 1657.7,546.0 1658.8,546.0 1659.8,546.0 1660.8,546.0 1661.8,539.6 1662.8,537.9 1663.8,533.1 1664.8,546.0 1665.8,543.5 1666.8,526.9 1667.8,522.5 1668.9,538.0" fill="none" stroke="#2ca02c" stroke-width="1.85" stroke-linejoin="bevel"/>
<polyline points="696.4,525.5 697.7,537.3 699.1,545.1 700.4,546.0 701.7,539.0 703.0,533.4 704.3,546.0 705.7,533.9 707.0,537.1 708.3,545.1 709.6,544.5 710.9,542.4 712.3,537.1 713.6,527.6 714.9,543.6 716.2,543.7 717.5,526.5 718.9,536.5 720.2,541.4 721.5,537.4 722.8,532.1 724.1,546.0 725.5,535.3 726.8,534.7 728.1,532.1 729.4,535.0 730.7,534.6 732.1,546.0 733.4,546.0 734.7,538.8 736.0,542.6 737.3,534.2 738.7,533.9 740.0,543.7 741.3,539.0 742.6,538.9 743.9,536.2 745.3,537.7 746.6,534.3 747.9,540.2 749.2,539.3 750.5,546.0 751.9,540.7 753.2,534.2 754.5,538.0 755.8,528.9 757.1,539.5 758.5,528.9 759.8,546.0 761.1,546.0 762.4,537.2 763.7,517.6 765.1,541.1 766.4,541.8 767.7,539.9 769.0,543.8 770.3,534.6 771.7,535.8 773.0,546.0 774.3,539.8 775.6,546.0 776.9,530.1 778.3,544.7 779.6,540.7 780.9,533.7 782.2,535.1 783.5,542.0 784.9,536.9 786.2,546.0 787.5,535.6 788.8,546.0 790.1,535.8 791.5,536.6 792.8,542.7 794.1,535.5 795.4,532.9 796.7,537.0 798.1,537.8 799.4,546.0 800.7,538.5 802.0,540.8 803.3,546.0 804.7,537.8 806.0,524.8 807.3,536.5 808.6,540.5 809.9,543.4 811.3,538.8 812.6,536.2 813.9,535.4 815.2,545.1 816.5,538.3 817.9,537.8 819.2,546.0 820.5,542.7 821.8,536.7 823.1,537.0 824.5,546.0 825.8,532.9 827.1,539.7 828.4,540.6 829.7,539.9 831.1,542.4 832.4,546.0 833.7,542.9 835.0,540.6 836.3,540.8 837.7,529.7 839.0,535.1 840.3,537.0 841.6,536.1 843.0,544.4 844.3,546.0 845.6,539.5 846.9,536.8 848.2,540.5 849.6,538.1 850.9,538.0 852.2,538.1 853.5,542.5 854.8,542.8 856.2,542.3 857.5,539.3 858.8,530.6 860.1,542.0 861.4,546.0 862.8,541.1 864.1,537.2 865.4,532.3 866.7,533.3 868.0,524.0 869.4,523.3 870.7,522.4 872.0,525.6 873.3,517.7 874.6,519.1 876.0,512.0 877.3,506.7 878.6,498.0 879.9,482.7 881.2,481.5 882.6,469.1 883.9,465.0 885.2,460.4 886.5,450.0 887.8,424.0 889.2,403.1 890.5,374.5 891.8,349.7 893.1,326.6 894.4,293.9 895.8,272.5 897.1,238.8 898.4,204.2 899.7,188.7 901.0,161.6 902.4,147.9 903.7,144.5 905.0,123.5 906.3,121.4 907.6,116.0 909.0,117.3 910.3,123.7 911.6,113.1 912.9,100.0 914.2,115.1 915.6,131.2 916.9,148.0 918.2,162.4 919.5,169.9 920.8,177.7 922.2,195.3 923.5,210.2 924.8,223.5 926.1,245.6 927.4,259.2 928.8,258.7 930.1,278.2 931.4,293.0 932.7,301.7 934.0,313.5 935.4,323.5 936.7,336.2 938.0,344.7 939.3,352.9 940.6,359.0 942.0,368.5 943.3,376.1 944.6,381.1 945.9,386.2 947.2,392.5 948.6,399.6 949.9,399.5 951.2,402.7 952.5,407.4 953.8,408.4 955.2,413.2 956.5,408.2 957.8,411.8 959.1,417.7 960.4,416.0 961.8,419.3 963.1,422.6 964.4,420.7 965.7,420.0 967.0,431.1 968.4,425.4 969.7,431.8 971.0,437.5 972.3,434.2 973.6,436.0 975.0,442.2 976.3,441.2 977.6,442.3 978.9,445.2 980.2,450.9 981.6,455.1 982.9,460.0 984.2,458.9 985.5,465.7 986.8,469.0 988.2,474.2 989.5,481.4 990.8,477.1 992.1,481.7 993.4,486.6 994.8,488.2 996.1,491.3 997.4,491.8 998.7,497.6 1000.0,499.5 1001.4,498.8 1002.7,502.1 1004.0,503.1 1005.3,508.5 1006.6,505.0 1008.0,509.3 1009.3,506.6 1010.6,507.8 1011.9,511.8 1013.2,512.8 1014.6,513.5 1015.9,514.7 1017.2,514.7 1018.5,515.8 1019.8,516.3 1021.2,517.8 1022.5,517.9 1023.8,519.3 1025.1,518.7 1026.4,519.7 1027.8,519.1 1029.1,520.6 1030.4,519.2 1031.7,519.5 1033.0,521.9 1034.4,521.8 1035.7,521.5 1037.0,523.1 1038.3,521.8 1039.6,519.0 1041.0,522.9 1042.3,524.3 1043.6,525.9 1044.9,524.2 1046.2,524.7 1047.6,525.6 1048.9,525.2 1050.2,525.4 1051.5,525.2 1052.8,525.9 1054.2,526.2 1055.5,527.6 1056.8,527.9 1058.1,527.7 1059.4,526.0 1060.8,528.5 1062.1,527.9 1063.4,527.6 1064.7,529.0 1066.0,528.3 1067.4,528.7 1068.7,529.3 1070.0,528.1 1071.3,529.1 1072.6,529.1 1074.0,527.5 1075.3,529.9 1076.6,531.1 1077.9,528.3 1079.2,530.3 1080.6,529.3 1081.9,531.6 1083.2,532.9 1084.5,530.8 1085.8,532.3 1087.2,534.5 1088.5,531.8 1089.8,532.5 1091.1,533.5 1092.4,532.9 1093.8,534.7 1095.1,532.5 1096.4,532.7 1097.7,532.5 1099.0,535.0 1100.4,535.3 1101.7,536.0 1103.0,532.7 1104.3,532.7 1105.6,533.5 1107.0,537.5 1108.3,536.2 1109.6,536.3 1110.9,534.0 1112.2,535.6 1113.6,537.1 1114.9,535.9 1116.2,534.7 1117.5,534.0 1118.8,535.8 1120.2,535.6 1121.5,535.8 1122.8,535.8 1124.1,535.3 1125.4,535.9 1126.8,533.7 1128.1,534.7 1129.4,537.8 1130.7,534.2 1132.0,539.2 1133.4,536.8 1134.7,538.0 1136.0,534.3 1137.3,538.2 1138.6,534.7 1140.0,533.6 1141.3,535.0 1142.6,535.6 1143.9,535.4 1145.2,539.0 1146.6,537.1 1147.9,538.1 1149.2,538.8 1150.5,537.1 1151.8,538.6 1153.2,536.8 1154.5,537.6 1155.8,532.2 1157.1,536.1 1158.4,537.2 1159.8,538.1 1161.1,534.2 1162.4,538.0 1163.7,539.7 1165.0,536.5 1166.4,538.1 1167.7,539.7 1169.0,538.9 1170.3,536.4 1171.6,535.8 1173.0,537.3 1174.3,539.5 1175.6,537.9 1176.9,538.2 1178.2,536.7 1179.6,539.1 1180.9,538.2 1182.2,537.4 1183.5,536.5 1184.8,536.5 1186.2,539.9 1187.5,539.4 1188.8,538.7 1190.1,538.0 1191.4,537.3 1192.8,536.8 1194.1,540.8 1195.4,541.0 1196.7,539.5 1198.0,537.3 1199.4,538.5 1200.7,540.8 1202.0,540.4 1203.3,537.2 1204.6,539.6 1206.0,539.6 1207.3,538.2 1208.6,539.1 1209.9,537.8 1211.2,537.4 1212.6,536.1 1213.9,541.6 1215.2,538.2 1216.5,539.8 1217.8,540.3 1219.2,535.3 1220.5,541.1 1221.8,538.8 1223.1,536.9 1224.4,537.1 1225.8,536.7 1227.1,538.9 1228.4,537.5 1229.7,540.6 1231.0,540.5 1232.4,539.2 1233.7,537.9 1235.0,538.1 1236.3,540.9 1237.6,541.0 1239.0,542.1 1240.3,537.1 1241.6,538.2 1242.9,536.5 1244.2,542.7 1245.6,538.6 1246.9,542.0 1248.2,538.5 1249.5,539.3 1250.8,537.8 1252.2,542.9 1253.5,541.5 1254.8,541.4 1256.1,537.3 1257.4,537.5 1258.8,538.4 1260.1,536.4 1261.4,542.4 1262.7,539.3 1264.0,541.1 1265.4,540.0 1266.7,543.3 1268.0,543.5 1269.3,541.5 1270.6,538.9 1272.0,537.1 1273.3,542.2 1274.6,537.6 1275.9,544.1 1277.2,542.0 1278.6,538.8 1279.9,535.6 1281.2,539.9 1282.5,536.4 1283.8,537.4 1285.2,537.5 1286.5,537.3 1287.8,538.1 1289.1,541.5 1290.4,539.2 1291.8,538.1 1293.1,539.8 1294.4,540.0 1295.7,544.2 1297.0,537.3 1298.4,535.9 1299.7,543.0 1301.0,541.4 1302.3,540.2 1303.6,539.1 1305.0,543.9 1306.3,540.7 1307.6,540.1 1308.9,543.4 1310.2,539.9 1311.6,539.2 1312.9,534.4 1314.2,535.6 1315.5,539.2 1316.8,535.5 1318.2,542.3 1319.5,539.8 1320.8,541.3 1322.1,542.2 1323.4,537.9 1324.8,539.5 1326.1,539.6 1327.4,537.6 1328.7,537.6 1330.0,542.5 1331.4,542.6 1332.7,541.4 1334.0,539.1 1335.3,539.1 1336.6,538.4 1338.0,536.1 1339.3,537.8 1340.6,541.7 1341.9,540.3 1343.2,536.7 1344.6,540.9 1345.9,535.9 1347.2,537.4 1348.5,536.4 1349.8,536.7 1351.2,534.7 1352.5,539.9 1353.8,539.1 1355.1,541.3 1356.4,533.9 1357.8,539.7 1359.1,536.0 1360.4,545.7 1361.7,536.8 1363.0,536.7 1364.4,539.6 1365.7,537.2 1367.0,545.1 1368.3,539.6 1369.6,534.8 1371.0,538.0 1372.3,543.9 1373.6,538.6 1374.9,541.7 1376.2,533.2 1377.6,540.3 1378.9,538.6 1380.2,540.9 1381.5,541.1 1382.8,538.7 1384.2,543.1 1385.5,539.5 1386.8,539.8 1388.1,535.7 1389.4,536.7 1390.8,537.2 1392.1,545.0 1393.4,536.2 1394.7,537.0 1396.0,533.5 1397.4,543.6 1398.7,533.8 1400.0,538.8 1401.3,536.6 1402.6,537.7 1404.0,541.5 1405.3,540.9 1406.6,545.6 1407.9,536.1 1409.2,540.2 1410.6,540.2 1411.9,530.2 1413.2,535.1 1414.5,536.0 1415.5,543.1 1416.5,533.7 1417.5,543.2 1418.5,540.6 1419.5,536.1 1420.5,539.2 1421.5,531.8 1422.6,540.6 1423.6,541.8 1424.6,545.2 1425.6,541.0 1426.6,536.4 1427.6,534.7 1428.6,514.6 1429.6,539.5 1430.6,539.5 1431.6,535.4 1432.6,530.1 1433.7,541.7 1434.7,541.8 1435.7,541.4 1436.7,534.2 1437.7,539.0 1438.7,539.2 1439.7,542.4 1440.7,538.9 1441.7,532.5 1442.7,543.1 1443.8,538.4 1444.8,539.7 1445.8,532.4 1446.8,546.0 1447.8,535.6 1448.8,531.9 1449.8,537.9 1450.8,540.2 1451.8,540.5 1452.8,538.0 1453.8,543.9 1454.9,537.6 1455.9,527.6 1456.9,538.8 1457.9,541.8 1458.9,537.8 1459.9,537.9 1460.9,535.5 1461.9,543.8 1462.9,545.8 1463.9,533.6 1464.9,539.7 1466.0,539.4 1467.0,539.3 1468.0,532.4 1469.0,534.8 1470.0,539.6 1471.0,532.4 1472.0,531.1 1473.0,541.4 1474.0,540.4 1475.0,538.5 1476.1,539.8 1477.1,537.1 1478.1,536.6 1479.1,531.6 1480.1,535.3 1481.1,529.1 1482.1,545.2 1483.1,534.1 1484.1,539.6 1485.1,546.0 1486.1,540.2 1487.2,532.5 1488.2,542.2 1489.2,546.0 1490.2,534.0 1491.2,532.8 1492.2,541.7 1493.2,534.3 1494.2,544.0 1495.2,539.6 1496.2,544.4 1497.3,532.2 1498.3,530.0 1499.3,535.4 1500.3,541.7 1501.3,545.8 1502.3,524.9 1503.3,543.6 1504.3,528.0 1505.3,525.9 1506.3,544.6 1507.3,546.0 1508.4,535.0 1509.4,537.8 1510.4,533.1 1511.4,545.7 1512.4,538.4 1513.4,545.2 1514.4,533.4 1515.4,543.9 1516.4,534.1 1517.4,535.4 1518.4,528.8 1519.5,542.7 1520.5,542.1 1521.5,546.0 1522.5,546.0 1523.5,537.6 1524.5,541.1 1525.5,538.5 1526.5,540.0 1527.5,534.7 1528.5,535.1 1529.6,546.0 1530.6,539.7 1531.6,520.1 1532.6,537.3 1533.6,533.5 1534.6,532.2 1535.6,543.6 1536.6,528.0 1537.6,546.0 1538.6,528.0 1539.6,545.0 1540.7,536.2 1541.7,536.8 1542.7,536.0 1543.7,543.3 1544.7,546.0 1545.7,531.4 1546.7,535.3 1547.7,531.8 1548.7,541.8 1549.7,524.0 1550.8,531.2 1551.8,539.8 1552.8,539.9 1553.8,539.8 1554.8,538.0 1555.8,534.9 1556.8,530.4 1557.8,543.5 1558.8,532.2 1559.8,546.0 1560.8,523.6 1561.9,546.0 1562.9,543.1 1563.9,519.6 1564.9,513.0 1565.9,523.6 1566.9,546.0 1567.9,536.7 1568.9,527.2 1569.9,528.6 1570.9,529.9 1571.9,546.0 1573.0,545.8 1574.0,541.0 1575.0,509.4 1576.0,546.0 1577.0,544.7 1578.0,540.6 1579.0,531.3 1580.0,546.0 1581.0,546.0 1582.0,546.0 1583.1,538.5 1584.1,537.1 1585.1,546.0 1586.1,534.4 1587.1,535.9 1588.1,534.0 1589.1,538.8 1590.1,546.0 1591.1,534.4 1592.1,546.0 1593.1,534.9 1594.2,546.0 1595.2,545.8 1596.2,511.2 1597.2,531.5 1598.2,545.7 1599.2,524.2 1600.2,546.0 1601.2,546.0 1602.2,523.1 1603.2,536.2 1604.2,546.0 1605.3,521.9 1606.3,518.4 1607.3,522.8 1608.3,536.7 1609.3,546.0 1610.3,544.9 1611.3,546.0 1612.3,535.0 1613.3,546.0 1614.3,527.8 1615.4,541.1 1616.4,523.4 1617.4,546.0 1618.4,528.5 1619.4,527.3 1620.4,526.1 1621.4,530.1 1622.4,546.0 1623.4,546.0 1624.4,522.9 1625.4,532.1 1626.5,485.5 1627.5,532.5 1628.5,525.1 1629.5,502.2 1630.5,546.0 1631.5,536.1 1632.5,546.0 1633.5,512.7 1634.5,523.6 1635.5,537.5 1636.6,526.4 1637.6,537.9 1638.6,546.0 1639.6,546.0 1640.6,538.0 1641.6,544.0 1642.6,539.9 1643.6,546.0 1644.6,537.0 1645.6,513.6 1646.6,546.0 1647.7,546.0 1648.7,520.2 1649.7,495.0 1650.7,546.0 1651.7,546.0 1652.7,532.3 1653.7,542.5 1654.7,546.0 1655.7,546.0 1656.7,537.4 1657.7,527.5 1658.8,546.0 1659.8,546.0 1660.8,538.2 1661.8,541.5 1662.8,546.0 1663.8,497.9 1664.8,526.2 1665.8,535.4 1666.8,517.7 1667.8,522.9 1668.9,505.4" fill="none" stroke="#d62728" stroke-width="1.85" stroke-linejoin="bevel"/>
<polyline points="696.4,543.6 697.7,534.7 699.1,546.0 700.4,543.6 701.7,532.5 703.0,530.4 704.3,541.0 705.7,544.2 707.0,546.0 708.3,545.6 709.6,546.0 710.9,540.0 712.3,537.1 713.6,532.5 714.9,534.8 716.2,544.7 717.5,534.0 718.9,529.2 720.2,534.8 721.5,543.2 722.8,533.6 724.1,546.0 725.5,537.7 726.8,533.7 728.1,534.9 729.4,519.2 730.7,543.6 732.1,546.0 733.4,533.0 734.7,545.4 736.0,536.4 737.3,537.4 738.7,544.0 740.0,544.6 741.3,542.4 742.6,528.7 743.9,533.0 745.3,523.0 746.6,546.0 747.9,537.6 749.2,545.8 750.5,546.0 751.9,546.0 753.2,539.1 754.5,546.0 755.8,546.0 757.1,542.3 758.5,542.6 759.8,546.0 761.1,544.2 762.4,538.6 763.7,529.8 765.1,535.6 766.4,539.3 767.7,534.6 769.0,529.3 770.3,540.2 771.7,543.7 773.0,543.0 774.3,531.5 775.6,540.7 776.9,531.1 778.3,543.3 779.6,546.0 780.9,526.6 782.2,546.0 783.5,546.0 784.9,532.2 786.2,546.0 787.5,537.9 788.8,529.2 790.1,539.1 791.5,543.9 792.8,543.0 794.1,532.3 795.4,533.5 796.7,542.2 798.1,546.0 799.4,541.3 800.7,546.0 802.0,546.0 803.3,545.7 804.7,531.7 806.0,536.2 807.3,546.0 808.6,541.4 809.9,546.0 811.3,536.1 812.6,543.9 813.9,544.2 815.2,544.6 816.5,545.3 817.9,535.1 819.2,542.7 820.5,540.8 821.8,540.7 823.1,537.4 824.5,544.1 825.8,538.1 827.1,540.4 828.4,539.9 829.7,546.0 831.1,546.0 832.4,542.2 833.7,537.9 835.0,534.8 836.3,543.4 837.7,530.1 839.0,534.2 840.3,542.3 841.6,531.3 843.0,546.0 844.3,546.0 845.6,539.3 846.9,541.0 848.2,541.4 849.6,539.4 850.9,545.9 852.2,540.4 853.5,536.9 854.8,543.7 856.2,539.1 857.5,539.1 858.8,540.5 860.1,541.5 861.4,536.5 862.8,537.0 864.1,536.8 865.4,534.2 866.7,531.8 868.0,531.2 869.4,528.3 870.7,518.5 872.0,517.5 873.3,517.9 874.6,510.5 876.0,508.6 877.3,502.8 878.6,496.9 879.9,486.9 881.2,479.6 882.6,469.2 883.9,467.7 885.2,456.7 886.5,448.4 887.8,429.3 889.2,398.0 890.5,376.8 891.8,348.4 893.1,321.7 894.4,296.5 895.8,265.2 897.1,244.1 898.4,208.4 899.7,189.5 901.0,166.1 902.4,157.0 903.7,144.2 905.0,132.7 906.3,127.1 907.6,114.6 909.0,112.9 910.3,113.0 911.6,112.6 912.9,105.2 914.2,113.2 915.6,124.7 916.9,139.8 918.2,158.0 919.5,172.2 920.8,182.0 922.2,195.1 923.5,210.8 924.8,225.5 926.1,237.9 927.4,249.7 928.8,276.3 930.1,276.7 931.4,289.4 932.7,297.6 934.0,310.3 935.4,317.6 936.7,342.9 938.0,348.7 939.3,360.8 940.6,367.1 942.0,374.3 943.3,381.1 944.6,381.6 945.9,385.9 947.2,396.5 948.6,397.8 949.9,396.3 951.2,407.5 952.5,402.6 953.8,407.3 955.2,408.9 956.5,415.0 957.8,414.2 959.1,415.3 960.4,415.7 961.8,419.3 963.1,424.5 964.4,422.1 965.7,428.4 967.0,424.1 968.4,427.7 969.7,436.7 971.0,435.3 972.3,432.3 973.6,438.7 975.0,443.3 976.3,439.5 977.6,445.3 978.9,450.1 980.2,452.0 981.6,456.8 982.9,456.8 984.2,460.6 985.5,466.8 986.8,466.8 988.2,473.8 989.5,478.1 990.8,479.5 992.1,484.7 993.4,483.9 994.8,490.5 996.1,488.6 997.4,493.3 998.7,492.9 1000.0,497.1 1001.4,500.6 1002.7,500.9 1004.0,500.9 1005.3,505.4 1006.6,506.2 1008.0,507.8 1009.3,510.4 1010.6,510.1 1011.9,508.0 1013.2,513.5 1014.6,511.8 1015.9,514.7 1017.2,514.5 1018.5,516.2 1019.8,517.4 1021.2,517.9 1022.5,517.7 1023.8,518.1 1025.1,516.6 1026.4,518.4 1027.8,520.2 1029.1,519.1 1030.4,520.5 1031.7,519.4 1033.0,521.4 1034.4,522.0 1035.7,521.9 1037.0,523.4 1038.3,524.2 1039.6,523.2 1041.0,523.7 1042.3,523.5 1043.6,524.9 1044.9,524.3 1046.2,524.7 1047.6,525.0 1048.9,523.8 1050.2,527.6 1051.5,525.4 1052.8,524.7 1054.2,526.5 1055.5,528.2 1056.8,527.3 1058.1,527.6 1059.4,524.5 1060.8,527.2 1062.1,528.5 1063.4,530.0 1064.7,528.0 1066.0,528.4 1067.4,529.3 1068.7,527.3 1070.0,527.6 1071.3,528.9 1072.6,530.0 1074.0,530.5 1075.3,530.5 1076.6,531.4 1077.9,527.9 1079.2,531.6 1080.6,529.9 1081.9,532.5 1083.2,530.1 1084.5,531.6 1085.8,533.7 1087.2,534.1 1088.5,530.7 1089.8,533.7 1091.1,533.7 1092.4,534.7 1093.8,535.2 1095.1,534.3 1096.4,534.7 1097.7,533.7 1099.0,535.4 1100.4,535.4 1101.7,535.2 1103.0,531.9 1104.3,532.5 1105.6,534.0 1107.0,535.1 1108.3,537.0 1109.6,537.2 1110.9,533.8 1112.2,534.9 1113.6,536.4 1114.9,534.7 1116.2,535.5 1117.5,534.1 1118.8,532.3 1120.2,538.9 1121.5,536.3 1122.8,536.2 1124.1,534.9 1125.4,535.1 1126.8,536.2 1128.1,534.8 1129.4,530.8 1130.7,537.4 1132.0,539.1 1133.4,537.0 1134.7,538.5 1136.0,534.8 1137.3,538.1 1138.6,533.7 1140.0,537.5 1141.3,535.9 1142.6,536.9 1143.9,534.7 1145.2,537.1 1146.6,537.9 1147.9,539.3 1149.2,536.8 1150.5,534.5 1151.8,538.0 1153.2,538.1 1154.5,535.6 1155.8,538.8 1157.1,538.3 1158.4,534.1 1159.8,539.1 1161.1,535.0 1162.4,539.1 1163.7,540.1 1165.0,536.5 1166.4,537.1 1167.7,540.8 1169.0,538.5 1170.3,538.5 1171.6,537.4 1173.0,536.5 1174.3,536.6 1175.6,535.4 1176.9,538.8 1178.2,538.4 1179.6,536.6 1180.9,539.5 1182.2,538.5 1183.5,537.7 1184.8,537.3 1186.2,539.0 1187.5,540.8 1188.8,536.0 1190.1,538.1 1191.4,537.6 1192.8,536.5 1194.1,537.6 1195.4,538.0 1196.7,537.1 1198.0,536.9 1199.4,538.3 1200.7,536.9 1202.0,544.0 1203.3,536.7 1204.6,542.1 1206.0,535.5 1207.3,540.1 1208.6,537.5 1209.9,537.8 1211.2,537.0 1212.6,537.9 1213.9,538.5 1215.2,539.7 1216.5,542.0 1217.8,539.5 1219.2,536.5 1220.5,537.1 1221.8,538.9 1223.1,539.5 1224.4,536.5 1225.8,539.1 1227.1,534.4 1228.4,541.4 1229.7,537.4 1231.0,538.4 1232.4,539.3 1233.7,539.4 1235.0,539.2 1236.3,540.6 1237.6,539.8 1239.0,537.5 1240.3,538.2 1241.6,539.5 1242.9,543.1 1244.2,540.7 1245.6,539.8 1246.9,544.8 1248.2,538.6 1249.5,541.9 1250.8,534.4 1252.2,542.9 1253.5,539.5 1254.8,538.5 1256.1,539.4 1257.4,537.3 1258.8,536.6 1260.1,539.2 1261.4,543.3 1262.7,540.3 1264.0,542.2 1265.4,540.6 1266.7,542.6 1268.0,541.5 1269.3,539.4 1270.6,540.7 1272.0,538.7 1273.3,538.6 1274.6,539.1 1275.9,540.8 1277.2,543.1 1278.6,537.6 1279.9,539.6 1281.2,538.2 1282.5,537.0 1283.8,537.4 1285.2,533.0 1286.5,537.6 1287.8,539.1 1289.1,538.6 1290.4,540.4 1291.8,539.5 1293.1,537.2 1294.4,537.3 1295.7,545.6 1297.0,537.4 1298.4,534.2 1299.7,537.9 1301.0,536.5 1302.3,542.4 1303.6,540.1 1305.0,540.0 1306.3,539.0 1307.6,536.4 1308.9,541.5 1310.2,538.1 1311.6,539.6 1312.9,534.5 1314.2,540.2 1315.5,543.4 1316.8,537.3 1318.2,538.4 1319.5,538.4 1320.8,539.0 1322.1,541.8 1323.4,540.9 1324.8,538.5 1326.1,539.1 1327.4,541.5 1328.7,538.6 1330.0,540.0 1331.4,539.2 1332.7,539.9 1334.0,539.7 1335.3,540.4 1336.6,536.2 1338.0,539.3 1339.3,535.8 1340.6,539.9 1341.9,543.2 1343.2,537.7 1344.6,539.3 1345.9,535.9 1347.2,541.8 1348.5,538.0 1349.8,539.3 1351.2,539.8 1352.5,541.2 1353.8,539.1 1355.1,542.2 1356.4,536.5 1357.8,537.0 1359.1,537.6 1360.4,539.5 1361.7,539.5 1363.0,536.8 1364.4,542.4 1365.7,538.9 1367.0,545.5 1368.3,543.4 1369.6,541.6 1371.0,541.6 1372.3,545.0 1373.6,537.8 1374.9,543.2 1376.2,537.7 1377.6,537.8 1378.9,537.8 1380.2,539.2 1381.5,541.3 1382.8,541.5 1384.2,540.1 1385.5,542.9 1386.8,539.8 1388.1,533.4 1389.4,536.6 1390.8,538.9 1392.1,542.2 1393.4,537.6 1394.7,537.9 1396.0,535.8 1397.4,536.7 1398.7,542.2 1400.0,538.1 1401.3,539.6 1402.6,541.2 1404.0,542.1 1405.3,540.9 1406.6,533.3 1407.9,535.8 1409.2,536.1 1410.6,541.1 1411.9,538.0 1413.2,545.1 1414.5,533.0 1415.5,541.9 1416.5,537.2 1417.5,535.4 1418.5,540.8 1419.5,537.1 1420.5,539.7 1421.5,542.0 1422.6,540.7 1423.6,538.6 1424.6,541.0 1425.6,533.4 1426.6,538.2 1427.6,534.3 1428.6,532.8 1429.6,534.7 1430.6,541.5 1431.6,538.6 1432.6,533.4 1433.7,543.4 1434.7,543.2 1435.7,539.2 1436.7,536.6 1437.7,540.0 1438.7,539.3 1439.7,534.1 1440.7,535.9 1441.7,532.6 1442.7,543.1 1443.8,540.9 1444.8,535.2 1445.8,537.4 1446.8,545.4 1447.8,540.1 1448.8,536.6 1449.8,539.0 1450.8,539.7 1451.8,539.1 1452.8,536.4 1453.8,537.0 1454.9,534.9 1455.9,537.2 1456.9,543.2 1457.9,535.2 1458.9,530.4 1459.9,541.2 1460.9,544.6 1461.9,544.6 1462.9,542.8 1463.9,530.2 1464.9,534.5 1466.0,529.4 1467.0,536.8 1468.0,538.4 1469.0,540.0 1470.0,543.9 1471.0,533.7 1472.0,537.0 1473.0,543.5 1474.0,541.3 1475.0,537.3 1476.1,545.5 1477.1,537.3 1478.1,538.0 1479.1,534.9 1480.1,546.0 1481.1,544.2 1482.1,537.3 1483.1,538.2 1484.1,538.7 1485.1,544.9 1486.1,544.5 1487.2,530.3 1488.2,535.0 1489.2,540.6 1490.2,535.0 1491.2,541.8 1492.2,535.9 1493.2,530.0 1494.2,541.3 1495.2,536.2 1496.2,539.2 1497.3,530.2 1498.3,536.3 1499.3,534.4 1500.3,531.5 1501.3,539.4 1502.3,543.7 1503.3,546.0 1504.3,530.3 1505.3,527.8 1506.3,542.9 1507.3,546.0 1508.4,531.9 1509.4,545.3 1510.4,528.8 1511.4,543.7 1512.4,538.9 1513.4,531.2 1514.4,535.0 1515.4,537.4 1516.4,531.2 1517.4,545.3 1518.4,516.6 1519.5,533.4 1520.5,535.2 1521.5,546.0 1522.5,546.0 1523.5,531.6 1524.5,546.0 1525.5,539.4 1526.5,537.3 1527.5,538.2 1528.5,533.7 1529.6,544.6 1530.6,542.8 1531.6,527.6 1532.6,546.0 1533.6,529.0 1534.6,532.3 1535.6,532.9 1536.6,539.3 1537.6,546.0 1538.6,531.1 1539.6,533.1 1540.7,529.1 1541.7,538.8 1542.7,545.6 1543.7,545.1 1544.7,534.7 1545.7,528.0 1546.7,535.5 1547.7,527.2 1548.7,539.7 1549.7,539.2 1550.8,527.2 1551.8,527.7 1552.8,546.0 1553.8,546.0 1554.8,537.3 1555.8,542.7 1556.8,544.4 1557.8,542.2 1558.8,542.1 1559.8,546.0 1560.8,517.5 1561.9,546.0 1562.9,542.9 1563.9,546.0 1564.9,537.2 1565.9,536.7 1566.9,519.7 1567.9,538.8 1568.9,519.6 1569.9,520.7 1570.9,537.2 1571.9,546.0 1573.0,541.2 1574.0,538.4 1575.0,520.6 1576.0,541.4 1577.0,541.8 1578.0,531.3 1579.0,542.2 1580.0,546.0 1581.0,535.7 1582.0,539.8 1583.1,537.2 1584.1,525.2 1585.1,546.0 1586.1,542.2 1587.1,526.1 1588.1,542.3 1589.1,546.0 1590.1,546.0 1591.1,546.0 1592.1,546.0 1593.1,546.0 1594.2,546.0 1595.2,546.0 1596.2,523.9 1597.2,545.6 1598.2,546.0 1599.2,546.0 1600.2,539.6 1601.2,546.0 1602.2,540.0 1603.2,539.2 1604.2,546.0 1605.3,517.9 1606.3,527.1 1607.3,536.1 1608.3,546.0 1609.3,546.0 1610.3,538.7 1611.3,546.0 1612.3,541.5 1613.3,546.0 1614.3,511.8 1615.4,540.7 1616.4,543.5 1617.4,546.0 1618.4,546.0 1619.4,524.3 1620.4,541.4 1621.4,546.0 1622.4,546.0 1623.4,528.5 1624.4,526.3 1625.4,513.9 1626.5,545.6 1627.5,534.3 1628.5,523.3 1629.5,491.4 1630.5,546.0 1631.5,542.6 1632.5,545.8 1633.5,507.1 1634.5,532.5 1635.5,546.0 1636.6,546.0 1637.6,546.0 1638.6,546.0 1639.6,546.0 1640.6,533.2 1641.6,546.0 1642.6,528.3 1643.6,546.0 1644.6,546.0 1645.6,510.3 1646.6,546.0 1647.7,546.0 1648.7,519.3 1649.7,513.0 1650.7,546.0 1651.7,546.0 1652.7,546.0 1653.7,546.0 1654.7,546.0 1655.7,540.0 1656.7,546.0 1657.7,546.0 1658.8,546.0 1659.8,546.0 1660.8,527.9 1661.8,512.8 1662.8,546.0 1663.8,515.2 1664.8,533.1 1665.8,546.0 1666.8,509.1 1667.8,517.4 1668.9,546.0" fill="none" stroke="#9467bd" stroke-width="1.85" stroke-linejoin="bevel"/>
<polyline points="696.4,532.1 697.7,538.8 699.1,535.8 700.4,545.7 701.7,531.3 703.0,546.0 704.3,538.5 705.7,524.9 707.0,542.7 708.3,546.0 709.6,546.0 710.9,528.5 712.3,539.4 713.6,536.9 714.9,546.0 716.2,542.4 717.5,525.3 718.9,538.5 720.2,546.0 721.5,532.5 722.8,530.6 724.1,545.1 725.5,539.7 726.8,535.8 728.1,532.9 729.4,540.1 730.7,532.6 732.1,532.3 733.4,545.0 734.7,541.6 736.0,545.4 737.3,544.4 738.7,546.0 740.0,544.3 741.3,546.0 742.6,543.1 743.9,546.0 745.3,528.0 746.6,543.2 747.9,532.4 749.2,543.0 750.5,545.9 751.9,546.0 753.2,545.0 754.5,546.0 755.8,546.0 757.1,538.1 758.5,544.4 759.8,546.0 761.1,546.0 762.4,542.0 763.7,526.6 765.1,534.7 766.4,537.4 767.7,543.8 769.0,538.2 770.3,537.6 771.7,534.8 773.0,533.8 774.3,538.0 775.6,539.7 776.9,533.0 778.3,544.7 779.6,546.0 780.9,531.1 782.2,546.0 783.5,532.9 784.9,538.4 786.2,538.9 787.5,540.4 788.8,539.2 790.1,537.6 791.5,530.8 792.8,542.4 794.1,535.2 795.4,534.8 796.7,536.0 798.1,538.8 799.4,541.4 800.7,542.8 802.0,542.9 803.3,540.5 804.7,545.0 806.0,542.9 807.3,541.0 808.6,537.8 809.9,541.6 811.3,538.7 812.6,535.2 813.9,544.6 815.2,540.0 816.5,537.8 817.9,538.1 819.2,544.9 820.5,540.1 821.8,539.5 823.1,539.1 824.5,546.0 825.8,537.6 827.1,539.9 828.4,543.7 829.7,535.4 831.1,544.2 832.4,546.0 833.7,542.3 835.0,544.7 836.3,535.5 837.7,531.2 839.0,535.4 840.3,540.3 841.6,540.6 843.0,546.0 844.3,540.9 845.6,534.4 846.9,544.3 848.2,536.9 849.6,538.2 850.9,542.1 852.2,534.2 853.5,537.2 854.8,539.7 856.2,538.5 857.5,532.3 858.8,538.0 860.1,541.9 861.4,539.4 862.8,536.5 864.1,533.3 865.4,532.2 866.7,531.1 868.0,528.5 869.4,529.0 870.7,518.6 872.0,517.4 873.3,514.5 874.6,507.1 876.0,511.8 877.3,502.4 878.6,500.0 879.9,486.2 881.2,481.4 882.6,473.0 883.9,463.6 885.2,458.3 886.5,453.0 887.8,429.2 889.2,398.8 890.5,373.6 891.8,345.8 893.1,325.8 894.4,284.4 895.8,263.9 897.1,235.4 898.4,210.9 899.7,181.7 901.0,170.4 902.4,142.7 903.7,125.8 905.0,129.0 906.3,103.7 907.6,116.4 909.0,108.6 910.3,100.1 911.6,101.9 912.9,110.7 914.2,117.3 915.6,119.9 916.9,135.6 918.2,154.0 919.5,166.1 920.8,182.0 922.2,200.4 923.5,207.2 924.8,219.7 926.1,245.2 927.4,241.2 928.8,267.3 930.1,280.6 931.4,282.3 932.7,304.7 934.0,315.7 935.4,330.7 936.7,340.4 938.0,343.4 939.3,357.2 940.6,366.1 942.0,375.2 943.3,378.8 944.6,383.7 945.9,382.6 947.2,392.2 948.6,394.7 949.9,400.2 951.2,396.5 952.5,405.9 953.8,411.3 955.2,411.1 956.5,411.1 957.8,418.2 959.1,415.1 960.4,410.2 961.8,413.2 963.1,422.7 964.4,420.1 965.7,427.0 967.0,425.2 968.4,428.7 969.7,431.6 971.0,433.0 972.3,431.8 973.6,434.0 975.0,439.4 976.3,437.9 977.6,442.6 978.9,448.0 980.2,447.1 981.6,452.6 982.9,458.1 984.2,461.1 985.5,464.8 986.8,464.8 988.2,473.1 989.5,477.0 990.8,478.7 992.1,482.8 993.4,487.0 994.8,486.9 996.1,488.5 997.4,492.8 998.7,495.9 1000.0,496.5 1001.4,500.2 1002.7,500.0 1004.0,504.4 1005.3,504.8 1006.6,507.2 1008.0,505.8 1009.3,508.2 1010.6,509.4 1011.9,511.4 1013.2,512.0 1014.6,511.0 1015.9,514.3 1017.2,513.2 1018.5,516.4 1019.8,515.5 1021.2,516.8 1022.5,516.8 1023.8,517.8 1025.1,517.6 1026.4,518.4 1027.8,521.0 1029.1,519.2 1030.4,521.0 1031.7,521.1 1033.0,519.7 1034.4,522.2 1035.7,523.2 1037.0,524.5 1038.3,522.5 1039.6,523.1 1041.0,524.6 1042.3,524.1 1043.6,525.7 1044.9,524.7 1046.2,525.0 1047.6,524.5 1048.9,524.2 1050.2,526.2 1051.5,524.0 1052.8,524.4 1054.2,526.7 1055.5,527.7 1056.8,527.4 1058.1,527.4 1059.4,527.6 1060.8,528.6 1062.1,528.4 1063.4,528.9 1064.7,529.3 1066.0,529.2 1067.4,530.6 1068.7,529.2 1070.0,528.4 1071.3,531.4 1072.6,530.2 1074.0,529.2 1075.3,530.2 1076.6,530.1 1077.9,528.0 1079.2,529.7 1080.6,530.8 1081.9,531.2 1083.2,529.3 1084.5,531.4 1085.8,533.0 1087.2,535.4 1088.5,533.6 1089.8,537.1 1091.1,535.9 1092.4,533.1 1093.8,534.4 1095.1,535.6 1096.4,534.3 1097.7,534.6 1099.0,535.9 1100.4,536.1 1101.7,534.4 1103.0,533.4 1104.3,533.6 1105.6,534.9 1107.0,534.6 1108.3,535.6 1109.6,537.1 1110.9,535.6 1112.2,538.7 1113.6,534.7 1114.9,536.1 1116.2,534.5 1117.5,532.6 1118.8,535.7 1120.2,536.4 1121.5,534.2 1122.8,537.9 1124.1,536.7 1125.4,537.5 1126.8,534.7 1128.1,534.6 1129.4,534.1 1130.7,536.6 1132.0,538.8 1133.4,539.3 1134.7,537.8 1136.0,537.8 1137.3,538.8 1138.6,534.3 1140.0,538.3 1141.3,534.7 1142.6,536.7 1143.9,534.5 1145.2,538.7 1146.6,534.5 1147.9,539.5 1149.2,537.2 1150.5,536.2 1151.8,538.2 1153.2,537.0 1154.5,538.4 1155.8,537.9 1157.1,538.1 1158.4,537.5 1159.8,538.9 1161.1,536.8 1162.4,536.9 1163.7,537.0 1165.0,537.8 1166.4,536.1 1167.7,539.4 1169.0,537.7 1170.3,537.8 1171.6,535.8 1173.0,535.7 1174.3,541.8 1175.6,535.4 1176.9,536.0 1178.2,539.1 1179.6,538.7 1180.9,537.7 1182.2,540.4 1183.5,540.6 1184.8,535.1 1186.2,540.5 1187.5,541.4 1188.8,538.9 1190.1,535.3 1191.4,532.5 1192.8,535.5 1194.1,538.3 1195.4,539.7 1196.7,537.0 1198.0,538.5 1199.4,537.0 1200.7,538.6 1202.0,539.0 1203.3,541.3 1204.6,538.7 1206.0,536.7 1207.3,536.9 1208.6,538.8 1209.9,539.9 1211.2,537.0 1212.6,538.4 1213.9,540.5 1215.2,538.4 1216.5,537.5 1217.8,540.5 1219.2,536.6 1220.5,542.0 1221.8,534.8 1223.1,539.3 1224.4,536.9 1225.8,537.1 1227.1,539.1 1228.4,541.0 1229.7,538.8 1231.0,538.7 1232.4,539.4 1233.7,537.7 1235.0,537.6 1236.3,541.3 1237.6,539.1 1239.0,540.5 1240.3,539.9 1241.6,540.0 1242.9,541.6 1244.2,540.3 1245.6,538.1 1246.9,542.4 1248.2,535.4 1249.5,540.8 1250.8,539.6 1252.2,536.8 1253.5,543.3 1254.8,539.6 1256.1,540.5 1257.4,539.0 1258.8,536.5 1260.1,539.2 1261.4,544.0 1262.7,540.4 1264.0,541.6 1265.4,540.4 1266.7,545.1 1268.0,540.4 1269.3,536.9 1270.6,541.0 1272.0,536.5 1273.3,537.3 1274.6,537.4 1275.9,540.7 1277.2,539.3 1278.6,540.0 1279.9,540.3 1281.2,539.9 1282.5,536.4 1283.8,538.0 1285.2,535.2 1286.5,541.6 1287.8,538.0 1289.1,537.8 1290.4,540.8 1291.8,533.5 1293.1,536.8 1294.4,538.5 1295.7,541.0 1297.0,539.4 1298.4,534.7 1299.7,540.3 1301.0,537.3 1302.3,542.6 1303.6,538.5 1305.0,538.9 1306.3,536.7 1307.6,537.9 1308.9,541.6 1310.2,540.5 1311.6,536.9 1312.9,532.7 1314.2,536.6 1315.5,537.6 1316.8,536.7 1318.2,532.3 1319.5,540.6 1320.8,543.1 1322.1,542.9 1323.4,539.8 1324.8,539.1 1326.1,539.2 1327.4,541.3 1328.7,534.8 1330.0,537.1 1331.4,537.2 1332.7,536.6 1334.0,541.7 1335.3,539.1 1336.6,542.2 1338.0,534.4 1339.3,537.9 1340.6,538.5 1341.9,540.0 1343.2,539.9 1344.6,538.3 1345.9,541.2 1347.2,536.4 1348.5,539.6 1349.8,536.9 1351.2,537.9 1352.5,540.0 1353.8,539.7 1355.1,541.2 1356.4,539.8 1357.8,540.0 1359.1,539.3 1360.4,544.1 1361.7,541.7 1363.0,532.3 1364.4,537.6 1365.7,535.1 1367.0,544.7 1368.3,538.4 1369.6,535.0 1371.0,535.6 1372.3,544.9 1373.6,534.8 1374.9,537.7 1376.2,541.9 1377.6,536.2 1378.9,535.9 1380.2,538.5 1381.5,545.1 1382.8,539.6 1384.2,543.9 1385.5,535.8 1386.8,534.7 1388.1,541.2 1389.4,531.7 1390.8,528.9 1392.1,539.5 1393.4,542.2 1394.7,536.0 1396.0,534.2 1397.4,545.3 1398.7,539.1 1400.0,538.4 1401.3,539.5 1402.6,538.8 1404.0,536.3 1405.3,541.0 1406.6,539.8 1407.9,531.7 1409.2,543.8 1410.6,539.6 1411.9,537.0 1413.2,538.4 1414.5,536.6 1415.5,544.4 1416.5,537.0 1417.5,543.3 1418.5,537.0 1419.5,534.4 1420.5,542.1 1421.5,540.4 1422.6,540.2 1423.6,540.9 1424.6,537.3 1425.6,535.7 1426.6,538.5 1427.6,542.6 1428.6,535.3 1429.6,546.0 1430.6,542.0 1431.6,537.9 1432.6,534.0 1433.7,534.0 1434.7,539.0 1435.7,537.1 1436.7,532.4 1437.7,534.2 1438.7,539.4 1439.7,541.5 1440.7,535.3 1441.7,536.5 1442.7,545.8 1443.8,544.1 1444.8,535.7 1445.8,541.8 1446.8,544.4 1447.8,543.1 1448.8,532.9 1449.8,537.7 1450.8,540.5 1451.8,546.0 1452.8,538.4 1453.8,535.2 1454.9,534.2 1455.9,533.6 1456.9,546.0 1457.9,546.0 1458.9,537.4 1459.9,539.1 1460.9,534.2 1461.9,539.1 1462.9,538.8 1463.9,525.0 1464.9,535.3 1466.0,538.0 1467.0,535.5 1468.0,532.0 1469.0,545.1 1470.0,542.2 1471.0,536.7 1472.0,531.8 1473.0,544.2 1474.0,539.4 1475.0,534.6 1476.1,541.0 1477.1,541.6 1478.1,539.1 1479.1,533.9 1480.1,536.2 1481.1,542.3 1482.1,539.5 1483.1,539.6 1484.1,533.7 1485.1,544.3 1486.1,535.4 1487.2,532.4 1488.2,543.2 1489.2,534.7 1490.2,536.0 1491.2,541.2 1492.2,543.4 1493.2,538.5 1494.2,526.0 1495.2,534.5 1496.2,533.3 1497.3,529.4 1498.3,533.3 1499.3,533.2 1500.3,538.8 1501.3,543.9 1502.3,531.3 1503.3,546.0 1504.3,533.9 1505.3,533.5 1506.3,546.0 1507.3,546.0 1508.4,536.7 1509.4,540.4 1510.4,532.3 1511.4,544.6 1512.4,546.0 1513.4,536.7 1514.4,538.6 1515.4,535.1 1516.4,531.5 1517.4,537.4 1518.4,534.9 1519.5,543.7 1520.5,540.2 1521.5,546.0 1522.5,546.0 1523.5,525.1 1524.5,542.0 1525.5,528.0 1526.5,537.5 1527.5,545.8 1528.5,537.3 1529.6,546.0 1530.6,543.5 1531.6,524.3 1532.6,539.3 1533.6,521.1 1534.6,529.2 1535.6,533.2 1536.6,535.1 1537.6,546.0 1538.6,539.0 1539.6,545.9 1540.7,534.4 1541.7,536.9 1542.7,546.0 1543.7,535.8 1544.7,545.9 1545.7,541.8 1546.7,521.3 1547.7,537.7 1548.7,531.0 1549.7,544.0 1550.8,533.0 1551.8,529.9 1552.8,546.0 1553.8,538.6 1554.8,544.2 1555.8,540.6 1556.8,546.0 1557.8,546.0 1558.8,527.0 1559.8,546.0 1560.8,523.9 1561.9,546.0 1562.9,531.8 1563.9,541.6 1564.9,541.2 1565.9,546.0 1566.9,535.5 1567.9,534.0 1568.9,536.6 1569.9,520.3 1570.9,546.0 1571.9,542.3 1573.0,530.2 1574.0,535.6 1575.0,505.9 1576.0,546.0 1577.0,546.0 1578.0,538.6 1579.0,537.0 1580.0,546.0 1581.0,528.4 1582.0,546.0 1583.1,546.0 1584.1,529.2 1585.1,546.0 1586.1,536.2 1587.1,526.3 1588.1,546.0 1589.1,543.6 1590.1,546.0 1591.1,541.7 1592.1,546.0 1593.1,546.0 1594.2,546.0 1595.2,545.3 1596.2,526.8 1597.2,536.7 1598.2,538.4 1599.2,532.8 1600.2,539.7 1601.2,546.0 1602.2,524.8 1603.2,546.0 1604.2,546.0 1605.3,541.4 1606.3,516.6 1607.3,532.2 1608.3,523.5 1609.3,546.0 1610.3,534.5 1611.3,546.0 1612.3,503.4 1613.3,531.8 1614.3,533.1 1615.4,540.8 1616.4,546.0 1617.4,546.0 1618.4,523.3 1619.4,534.9 1620.4,546.0 1621.4,542.5 1622.4,546.0 1623.4,546.0 1624.4,519.1 1625.4,528.3 1626.5,512.3 1627.5,545.6 1628.5,539.9 1629.5,508.1 1630.5,546.0 1631.5,534.4 1632.5,546.0 1633.5,537.1 1634.5,540.7 1635.5,546.0 1636.6,546.0 1637.6,531.3 1638.6,546.0 1639.6,546.0 1640.6,543.7 1641.6,542.2 1642.6,537.0 1643.6,532.0 1644.6,535.6 1645.6,509.3 1646.6,546.0 1647.7,546.0 1648.7,529.9 1649.7,498.6 1650.7,546.0 1651.7,546.0 1652.7,546.0 1653.7,546.0 1654.7,535.8 1655.7,546.0 1656.7,533.2 1657.7,535.9 1658.8,546.0 1659.8,546.0 1660.8,512.5 1661.8,509.5 1662.8,546.0 1663.8,514.5 1664.8,519.5 1665.8,525.9 1666.8,510.7 1667.8,533.0 1668.9,525.0" fill="none" stroke="#8c564b" stroke-width="1.85" stroke-linejoin="bevel"/>
</g>
<line x1="696.5" x2="701.9" y1="451.3" y2="451.3" stroke="#000" stroke-width="1.1"/>
<line x1="696.5" x2="701.9" y1="360.0" y2="360.0" stroke="#000" stroke-width="1.1"/>
<line x1="696.5" x2="701.9" y1="268.8" y2="268.8" stroke="#000" stroke-width="1.1"/>
<line x1="696.5" x2="701.9" y1="177.5" y2="177.5" stroke="#000" stroke-width="1.1"/>
<line x1="696.5" x2="701.9" y1="86.3" y2="86.3" stroke="#000" stroke-width="1.1"/>
<rect x="696.5" y="73.5" width="971" height="469" fill="none" stroke="#000" stroke-width="1.1"/>
<text x="792.9" y="556" text-anchor="middle" font-family='"DejaVu Sans",sans-serif' font-size="12" fill="#000">400</text>
<text x="987.0" y="556" text-anchor="middle" font-family='"DejaVu Sans",sans-serif' font-size="12" fill="#000">500</text>
<text x="1181.1" y="556" text-anchor="middle" font-family='"DejaVu Sans",sans-serif' font-size="12" fill="#000">600</text>
<text x="1375.3" y="556" text-anchor="middle" font-family='"DejaVu Sans",sans-serif' font-size="12" fill="#000">700</text>
<text x="1569.4" y="556" text-anchor="middle" font-family='"DejaVu Sans",sans-serif' font-size="12" fill="#000">800</text>
<text x="692.3" y="546.1" text-anchor="end" font-family='"DejaVu Sans",sans-serif' font-size="12" fill="#000">0</text>
<text x="692.3" y="454.9" text-anchor="end" font-family='"DejaVu Sans",sans-serif' font-size="12" fill="#000">1</text>
<text x="692.3" y="363.6" text-anchor="end" font-family='"DejaVu Sans",sans-serif' font-size="12" fill="#000">2</text>
<text x="692.3" y="272.4" text-anchor="end" font-family='"DejaVu Sans",sans-serif' font-size="12" fill="#000">3</text>
<text x="692.3" y="181.1" text-anchor="end" font-family='"DejaVu Sans",sans-serif' font-size="12" fill="#000">4</text>
<text x="692.3" y="89.9" text-anchor="end" font-family='"DejaVu Sans",sans-serif' font-size="12" fill="#000">5</text>
<text x="696.8" y="68.9" font-family='"DejaVu Sans",sans-serif' font-size="12" fill="#000" textLength="30.6">1e−6</text>
<text x="1181.3" y="572.9" text-anchor="middle" font-family='"DejaVu Sans",sans-serif' font-size="12" fill="#000">Spectrometer Wavelength [nm]</text>
<text transform="translate(673.6,308) rotate(-90)" text-anchor="middle" font-family='"DejaVu Sans",sans-serif' font-size="12" fill="#000" textLength="183">Spectrometer Intensity [W/nm]</text>
<rect x="1564.5" y="79.5" width="97" height="110.5" rx="2.5" fill="#fff" fill-opacity=".8" stroke="#cccccc" stroke-opacity=".8" stroke-width="1"/>
<line x1="1569" x2="1594" y1="88.9" y2="88.9" stroke="#1f77b4" stroke-width="1.6"/>
<text x="1603" y="93.3" font-family='"DejaVu Sans",sans-serif' font-size="12" fill="#000" textLength="52.2">Loop1=1</text>
<line x1="1569" x2="1594" y1="106.9" y2="106.9" stroke="#ff7f0e" stroke-width="1.6"/>
<text x="1603" y="111.3" font-family='"DejaVu Sans",sans-serif' font-size="12" fill="#000" textLength="52.2">Loop1=2</text>
<line x1="1569" x2="1594" y1="124.9" y2="124.9" stroke="#2ca02c" stroke-width="1.6"/>
<text x="1603" y="129.3" font-family='"DejaVu Sans",sans-serif' font-size="12" fill="#000" textLength="52.2">Loop1=3</text>
<line x1="1569" x2="1594" y1="142.9" y2="142.9" stroke="#d62728" stroke-width="1.6"/>
<text x="1603" y="147.3" font-family='"DejaVu Sans",sans-serif' font-size="12" fill="#000" textLength="52.2">Loop1=4</text>
<line x1="1569" x2="1594" y1="160.9" y2="160.9" stroke="#9467bd" stroke-width="1.6"/>
<text x="1603" y="165.3" font-family='"DejaVu Sans",sans-serif' font-size="12" fill="#000" textLength="52.2">Loop1=5</text>
<line x1="1569" x2="1594" y1="178.9" y2="178.9" stroke="#8c564b" stroke-width="1.6"/>
<text x="1603" y="183.3" font-family='"DejaVu Sans",sans-serif' font-size="12" fill="#000" textLength="52.2">Loop1=6</text>
<g fill="#000" stroke="none">
<path d="M1551.4 91 L1561 82.9 L1570.6 91" fill="none" stroke="#000" stroke-width="2.1" stroke-linejoin="miter"/>
<rect x="1565.4" y="83.2" width="2.9" height="5.6"/>
<path d="M1561 86.6 L1568 92.3 V98.9 H1563 V94.6 H1559.3 V98.9 H1554 V92.3 Z"/>
<path transform="translate(1591.9,89.8)" d="M0 -11.4 L4.4 -6.3 H1.5 V-1.5 H6.3 V-4.4 L11.2 0 L6.3 4.4 V1.5 H1.5 V6.3 H4.4 L0 11.4 L-4.4 6.3 H-1.5 V1.5 H-6.3 V4.4 L-11.2 0 L-6.3 -4.4 V-1.5 H-1.5 V-6.3 H-4.4 Z"/>
</g>
<circle cx="1621.1" cy="87.2" r="7.1" fill="none" stroke="#000" stroke-width="3"/>
<path d="M1626.6 93.2 L1631.6 98.4" stroke="#000" stroke-width="3.4" stroke-linecap="round"/>
<path d="M1645.8 81.4 H1657.6 L1662.6 86.4 V97.5 H1645.8 Z" fill="none" stroke="#000" stroke-width="2.3" stroke-linejoin="round"/>
<rect x="1648.2" y="81" width="8.4" height="5" fill="#000"/><rect x="1653.4" y="81.8" width="1.8" height="3" fill="#fff"/>
<rect x="1649.1" y="92.4" width="10.4" height="4.6" fill="#fff" stroke="#000" stroke-width="1.5"/>
</svg>
<div class="t" style="left:634.40px;top:52px;font:11px/14px 'Liberation Sans',sans-serif;letter-spacing:0.271px;color:#000;">x=399.966, y=1.62981e-06</div>
<div class="b" style="left:633px;top:581px;width:1039px;height:19px;background:#dadada;"></div>
<div class="b" style="left:633px;top:581px;width:1039px;height:1px;background:#b8b8b8;"></div>
<div class="b" style="left:633px;top:599px;width:1039px;height:1px;background:#bdbdbd;"></div>
<div class="t" style="left:637.00px;top:584px;font:12px/16px 'Liberation Sans',sans-serif;letter-spacing:-0.072px;color:#000;">Debug</div>
<svg style="left:1631.2px;top:584.6px" width="36" height="12" viewBox="0 0 36 12"><path d="M6.4 3.8 V2 H11.6 V6.9 H9.8" fill="none" stroke="#222" stroke-width="1.4"/><path d="M5.7 1.6 H12.3" stroke="#222" stroke-width="1.7"/><rect x="3.7" y="4.7" width="5.6" height="5" fill="none" stroke="#222" stroke-width="1.4"/><path d="M25.6 2.9 L32.4 9.7 M32.4 2.9 L25.6 9.7" stroke="#222" stroke-width="1.9"/></svg>
<div class="b" style="left:635px;top:605px;width:1034px;height:394px;background:#fff;border:1px solid #828282;box-sizing:border-box;"></div>
<div class="b" style="left:1652px;top:606px;width:16px;height:392px;background:#f0f0f0;"></div>
<div class="b" style="left:1652px;top:962px;width:15px;height:18px;background:#cdcdcd;"></div>
<svg style="left:1655px;top:611.5px" width="9" height="7" viewBox="0 0 9 7"><path d="M0.8 5.6 L4.5 1.9 L8.2 5.6" fill="none" stroke="#505050" stroke-width="1.7"/></svg>
<svg style="left:1655px;top:986.5px" width="9" height="7" viewBox="0 0 9 7"><path d="M0.8 1.4 L4.5 5.1 L8.2 1.4" fill="none" stroke="#505050" stroke-width="1.7"/></svg>
<div class="t" style="left:639.50px;top:606px;font:11px/14px 'Liberation Sans',sans-serif;letter-spacing:0.016px;color:#000;">Saturation: 24.496428571428574</div>
<div class="t" style="left:639.50px;top:619px;font:11px/14px 'Liberation Sans',sans-serif;letter-spacing:0.016px;color:#000;">Saturation: 24.24642857142857</div>
<div class="t" style="left:639.50px;top:632px;font:11px/14px 'Liberation Sans',sans-serif;letter-spacing:0.016px;color:#000;">Saturation: 24.439285714285713</div>
<div class="t" style="left:639.50px;top:645px;font:11px/14px 'Liberation Sans',sans-serif;letter-spacing:0.015px;color:#000;">Saturation: 100.0</div>
<div class="t" style="left:639.50px;top:658px;font:11px/14px 'Liberation Sans',sans-serif;letter-spacing:0.015px;color:#000;">Saturation: 100.0</div>
<div class="t" style="left:639.50px;top:671px;font:11px/14px 'Liberation Sans',sans-serif;letter-spacing:0.015px;color:#000;">Saturation: 100.0</div>
<div class="t" style="left:640.00px;top:684px;font:11px/14px 'Liberation Sans',sans-serif;letter-spacing:0.337px;color:#000;">------------------------------------------------------------</div>
<div class="t" style="left:639.50px;top:697px;font:11px/14px 'Liberation Sans',sans-serif;letter-spacing:0.058px;color:#000;">Debug: 27.3.2026 14:30:35</div>
<div class="t" style="left:801.80px;top:697px;font:11px/14px 'Liberation Sans',sans-serif;letter-spacing:-0.107px;color:#000;">Run stopped</div>
<div class="t" style="left:640.00px;top:710px;font:11px/14px 'Liberation Sans',sans-serif;letter-spacing:0.337px;color:#000;">------------------------------------------------------------</div>
<div class="t" style="left:639.50px;top:723px;font:11px/14px 'Liberation Sans',sans-serif;letter-spacing:0.058px;color:#000;">Debug: 27.3.2026 14:30:43</div>
<div class="t" style="left:801.80px;top:723px;font:11px/14px 'Liberation Sans',sans-serif;letter-spacing:0.040px;color:#000;">Run started</div>
<div class="t" style="left:639.50px;top:736px;font:11px/14px 'Liberation Sans',sans-serif;letter-spacing:0.016px;color:#000;">Saturation: 24.70714285714286</div>
<div class="t" style="left:639.50px;top:749px;font:11px/14px 'Liberation Sans',sans-serif;letter-spacing:0.016px;color:#000;">Saturation: 30.317857142857143</div>
<div class="t" style="left:639.50px;top:762px;font:11px/14px 'Liberation Sans',sans-serif;letter-spacing:0.016px;color:#000;">Saturation: 33.52142857142857</div>
<div class="t" style="left:639.50px;top:775px;font:11px/14px 'Liberation Sans',sans-serif;letter-spacing:0.016px;color:#000;">Saturation: 33.43214285714286</div>
<div class="t" style="left:639.50px;top:788px;font:11px/14px 'Liberation Sans',sans-serif;letter-spacing:0.016px;color:#000;">Saturation: 33.65714285714286</div>
<div class="t" style="left:639.50px;top:801px;font:11px/14px 'Liberation Sans',sans-serif;letter-spacing:0.016px;color:#000;">Saturation: 33.35357142857143</div>
<div class="t" style="left:639.50px;top:814px;font:11px/14px 'Liberation Sans',sans-serif;letter-spacing:0.016px;color:#000;">Saturation: 33.41785714285714</div>
<div class="t" style="left:640.00px;top:827px;font:11px/14px 'Liberation Sans',sans-serif;letter-spacing:0.337px;color:#000;">------------------------------------------------------------</div>
<div class="t" style="left:639.50px;top:840px;font:11px/14px 'Liberation Sans',sans-serif;letter-spacing:0.058px;color:#000;">Debug: 27.3.2026 14:31:55</div>
<div class="t" style="left:801.80px;top:840px;font:11px/14px 'Liberation Sans',sans-serif;letter-spacing:-0.138px;color:#000;">Run finished</div>
<div class="t" style="left:640.00px;top:853px;font:11px/14px 'Liberation Sans',sans-serif;letter-spacing:0.337px;color:#000;">------------------------------------------------------------</div>
<div class="t" style="left:639.50px;top:866px;font:11px/14px 'Liberation Sans',sans-serif;letter-spacing:0.058px;color:#000;">Debug: 27.3.2026 14:33:14</div>
<div class="t" style="left:801.80px;top:866px;font:11px/14px 'Liberation Sans',sans-serif;letter-spacing:0.040px;color:#000;">Run started</div>
<div class="t" style="left:639.50px;top:879px;font:11px/14px 'Liberation Sans',sans-serif;letter-spacing:0.016px;color:#000;">Saturation: 24.432142857142857</div>
<div class="t" style="left:639.50px;top:892px;font:11px/14px 'Liberation Sans',sans-serif;letter-spacing:0.016px;color:#000;">Saturation: 25.564285714285713</div>
<div class="t" style="left:639.50px;top:905px;font:11px/14px 'Liberation Sans',sans-serif;letter-spacing:0.016px;color:#000;">Saturation: 25.67142857142857</div>
<div class="t" style="left:639.50px;top:918px;font:11px/14px 'Liberation Sans',sans-serif;letter-spacing:0.016px;color:#000;">Saturation: 25.785714285714285</div>
<div class="t" style="left:639.50px;top:931px;font:11px/14px 'Liberation Sans',sans-serif;letter-spacing:0.016px;color:#000;">Saturation: 25.574999999999996</div>
<div class="t" style="left:639.50px;top:944px;font:11px/14px 'Liberation Sans',sans-serif;letter-spacing:0.016px;color:#000;">Saturation: 25.617857142857144</div>
<div class="t" style="left:639.50px;top:957px;font:11px/14px 'Liberation Sans',sans-serif;letter-spacing:0.016px;color:#000;">Saturation: 25.24642857142857</div>
<div class="t" style="left:640.00px;top:970px;font:11px/14px 'Liberation Sans',sans-serif;letter-spacing:0.337px;color:#000;">------------------------------------------------------------</div>
<div class="t" style="left:639.50px;top:983px;font:11px/14px 'Liberation Sans',sans-serif;letter-spacing:0.058px;color:#000;">Debug: 27.3.2026 14:34:25</div>
<div class="t" style="left:801.80px;top:983px;font:11px/14px 'Liberation Sans',sans-serif;letter-spacing:-0.138px;color:#000;">Run finished</div>
<div class="b" style="left:640px;top:996px;width:1px;height:2px;background:#000;"></div>
<div class="b" style="left:0;top:1010px;width:1680px;height:40px;background:#090d13;z-index:6">
<div class="b" style="left:0;top:-1010px;width:0;height:0">
<svg style="left:16px;top:1022px" width="16" height="16" viewBox="0 0 16 16"><path d="M0 2.3 L6.6 1.3 V7.6 H0 Z M7.4 1.2 L16 0 V7.6 H7.4 Z M0 8.4 H6.6 V14.7 L0 13.7 Z M7.4 8.4 H16 V16 L7.4 14.8 Z" fill="#fff"/></svg>
<svg style="left:63px;top:1021px" width="18" height="18" viewBox="0 0 18 18"><circle cx="11.2" cy="6.6" r="5.2" fill="none" stroke="#fff" stroke-width="1.3"/><path d="M7.5 10.4 L1 17" stroke="#fff" stroke-width="1.4"/></svg>
<svg style="left:111px;top:1022px" width="18" height="16" viewBox="0 0 18 16"><rect x="1.6" y="4.3" width="8.8" height="7.2" fill="none" stroke="#fff" stroke-width="1.2"/><path d="M1 1.2 H11 M1 14.6 H11 M1 0.6 V2.6 M11 0.6 V2.6 M1 13.2 V15.2 M11 13.2 V15.2" stroke="#fff" stroke-width="1.2" fill="none"/><path d="M15.2 0.6 V3.4 M15.2 10 V15.2" stroke="#fff" stroke-width="1.2"/><rect x="13.8" y="4.6" width="2.8" height="2.8" fill="#fff"/></svg>
<div class="b" style="left:147px;top:1010px;width:48px;height:40px;background:#3b3e44;"></div>
<div class="b" style="left:191.5px;top:1010px;width:1px;height:40px;background:#2a2d33;"></div>
<div class="b" style="left:147px;top:1048px;width:44.7px;height:2px;background:#76b9ed;"></div>
<div class="b" style="left:192.5px;top:1048px;width:2.5px;height:2px;background:#5f9fd4;"></div>
<div class="b" style="left:200px;top:1048px;width:40px;height:2px;background:#76b9ed;"></div>
<div class="b" style="left:248.8px;top:1048px;width:40px;height:2px;background:#76b9ed;"></div>
<div class="b" style="left:297.6px;top:1048px;width:40px;height:2px;background:#76b9ed;"></div>
<svg style="left:163.5px;top:1019.5px" width="15.0333" height="20.5" viewBox="0 0 11 15"><path d="M9.2 2.2 C7.4 1.1 4.6 1.6 4.4 4.0 C4.2 6.6 7.4 7.2 6.7 10.2 C6.1 12.7 3.6 13.3 1.7 12.6" fill="none" stroke="#12a012" stroke-width="3.1" stroke-linecap="round"/><path d="M8.6 2.0 C6.9 1.3 5.2 2.1 5.0 3.8" fill="none" stroke="#49c549" stroke-width="0.8" stroke-linecap="round" opacity=".65"/></svg>
<svg style="left:207.9px;top:1017.9px" width="24.4" height="24.4" viewBox="0 0 24 24"><circle cx="12" cy="12" r="12" fill="#fff"/><path d="M12 12 L1.61 6 A12 12 0 0 1 22.39 6 Z" fill="#db4437"/><path d="M12 12 L22.39 6 A12 12 0 0 1 12 24 Z" fill="#ffcd40"/><path d="M12 12 L12 24 A12 12 0 0 1 1.61 6 Z" fill="#0f9d58"/><path d="M12 6.6 H22.1 A12 12 0 0 0 1.61 6 L6.6 14.6 Z" fill="#db4437"/><path d="M16.7 14.7 L11.7 23.99 A12 12 0 0 0 22.1 6.6 H12 Z" fill="#ffcd40"/><path d="M7.3 14.7 L2.3 6.1 A12 12 0 0 0 11.7 23.99 L16.7 14.7 Z" fill="#0f9d58"/><circle cx="12" cy="12" r="6.2" fill="#fff"/><circle cx="12" cy="12" r="4.9" fill="#4285f4"/></svg>
<svg style="left:257px;top:1020.9px" width="24" height="18.2" viewBox="0 0 24 18.2"><defs><linearGradient id="psg" x1="0" y1="0" x2="1" y2="1"><stop offset="0" stop-color="#4a7ee0"/><stop offset="1" stop-color="#3560c0"/></linearGradient></defs><path d="M4.6 0 H23.4 Q24.1 0 23.9 0.7 L20 17.5 Q19.8 18.2 19.1 18.2 H0.5 Q-0.2 18.2 0 17.5 L3.9 0.7 Q4.1 0 4.6 0 Z" fill="url(#psg)"/><path d="M7.3 3.4 L13.4 8.6 L5.6 14.3" fill="none" stroke="#fff" stroke-width="1.9" stroke-linecap="round"/><path d="M11.6 14.4 H16.6" stroke="#fff" stroke-width="1.8" stroke-linecap="round"/></svg>
<svg style="left:307px;top:1020.6px" width="22" height="18.6" viewBox="0 0 22 18.6"><path d="M0.3 1 Q0.3 0.2 1.1 0.2 H8.2 L9.4 1.4 H21 Q21.6 1.4 21.6 2 V4 H0.3 Z" fill="#f2cc5b"/><rect x="0.3" y="2.6" width="21.3" height="14.4" rx="0.6" fill="#fde69a"/><rect x="1.4" y="1" width="5.6" height="0.9" fill="#fff3c4"/><path d="M4 11.4 Q4 10.4 5 10.4 H17 Q18 10.4 18 11.4 V18.4 H13.9 V13.6 H8.1 V18.4 H4 Z" fill="#38aaea"/></svg>
<svg style="left:1454px;top:1026px" width="14" height="9" viewBox="0 0 14 9"><path d="M1 7.8 L7 1.6 L13 7.8" fill="none" stroke="#fff" stroke-width="1.3"/></svg>
<svg style="left:1477px;top:1024px" width="17" height="14" viewBox="0 0 17 14"><rect x="2.6" y="0.6" width="13.6" height="8.6" fill="none" stroke="#fff" stroke-width="1.1"/><path d="M9.4 9.2 V12.6 M5.8 12.7 H13" stroke="#fff" stroke-width="1.1"/><rect x="0.5" y="0.5" width="3.6" height="3.2" fill="#090d13" stroke="#fff" stroke-width="0.9"/><path d="M2.3 3.7 V12.7 H5.8" fill="none" stroke="#fff" stroke-width="1"/></svg>
<svg style="left:1500px;top:1024px" width="16" height="13" viewBox="0 0 16 13"><path d="M0.8 4.4 H3.4 L6.6 1.2 V11.8 L3.4 8.6 H0.8 Z" fill="none" stroke="#fff" stroke-width="1.05"/><path d="M10 4.2 L14.6 8.8 M14.6 4.2 L10 8.8" stroke="#fff" stroke-width="1.1"/></svg>
<div class="t" style="left:1527.00px;top:1022px;font:12px/16px 'Liberation Sans',sans-serif;letter-spacing:-1.101px;color:#fff;">ENG</div>
<div class="t" style="left:1578.20px;top:1013px;font:12px/16px 'Liberation Sans',sans-serif;letter-spacing:-0.706px;color:#fff;">14:34</div>
<div class="t" style="left:1562.60px;top:1031px;font:12px/16px 'Liberation Sans',sans-serif;letter-spacing:-0.186px;color:#fff;">27/03/2026</div>
<svg style="left:1639px;top:1022px" width="28" height="25" viewBox="0 0 28 25"><path d="M0.2 0 H15.8 V12.3 H0.2 Z" fill="#fff"/><path d="M2.6 3 H13.4 M2.6 5.6 H13.4 M2.6 8.2 H13.4 M2.6 10.6 H9" stroke="#090d13" stroke-width="0.9"/><circle cx="15.6" cy="15.1" r="9.8" fill="#45474b" stroke="#8a8a8a" stroke-width="1"/></svg>
<div class="t" style="left:1648.00px;top:1030px;font:bold 12px/16px 'Liberation Sans',sans-serif;letter-spacing:-0.074px;color:#fff;">20</div>
<div class="b" style="left:1675px;top:1010px;width:1px;height:40px;background:#4a4d52;"></div>
</div></div>
</body></html>
